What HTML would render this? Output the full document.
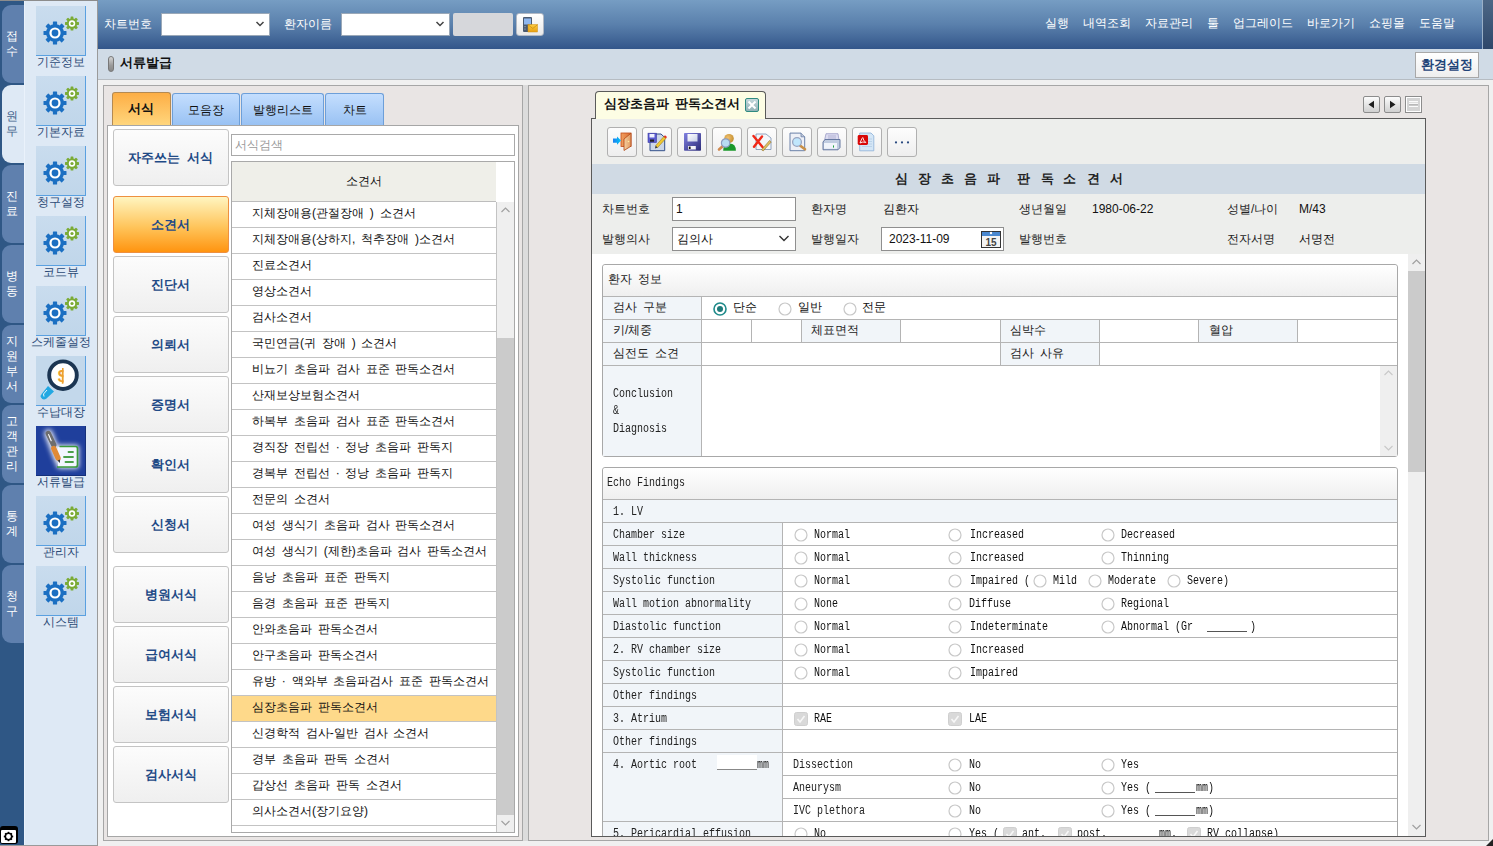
<!DOCTYPE html><html><head><meta charset="utf-8"><style>
html,body{margin:0;padding:0;}
body{width:1493px;height:846px;overflow:hidden;position:relative;background:#f0f0f0;font-family:"Liberation Sans", sans-serif;font-size:12px;color:#111;word-spacing:2.5px;}
div{box-sizing:border-box;}
.mono{font-family:"Liberation Mono", monospace;word-spacing:0;}

</style></head><body>
<div style="position:absolute;left:0px;top:0px;width:24px;height:845px;background:#2f5785;"></div>
<div style="position:absolute;left:2px;top:5px;width:22px;height:78px;background:#5f80ae;border-radius:9px 0 0 9px;"></div>
<div style="position:absolute;left:-188.5px;top:29.0px;width:400px;height:15px;line-height:15px;text-align:center;white-space:nowrap;color:#ffffff;font-size:12px;">접</div>
<div style="position:absolute;left:-188.5px;top:44.0px;width:400px;height:15px;line-height:15px;text-align:center;white-space:nowrap;color:#ffffff;font-size:12px;">수</div>
<div style="position:absolute;left:2px;top:85px;width:24px;height:78px;background:#dee9f5;border-radius:9px 0 0 9px;"></div>
<div style="position:absolute;left:-188.5px;top:109.0px;width:400px;height:15px;line-height:15px;text-align:center;white-space:nowrap;color:#3f5f8a;font-size:12px;">원</div>
<div style="position:absolute;left:-188.5px;top:124.0px;width:400px;height:15px;line-height:15px;text-align:center;white-space:nowrap;color:#3f5f8a;font-size:12px;">무</div>
<div style="position:absolute;left:2px;top:165px;width:22px;height:78px;background:#5f80ae;border-radius:9px 0 0 9px;"></div>
<div style="position:absolute;left:-188.5px;top:189.0px;width:400px;height:15px;line-height:15px;text-align:center;white-space:nowrap;color:#ffffff;font-size:12px;">진</div>
<div style="position:absolute;left:-188.5px;top:204.0px;width:400px;height:15px;line-height:15px;text-align:center;white-space:nowrap;color:#ffffff;font-size:12px;">료</div>
<div style="position:absolute;left:2px;top:245px;width:22px;height:78px;background:#5f80ae;border-radius:9px 0 0 9px;"></div>
<div style="position:absolute;left:-188.5px;top:269.0px;width:400px;height:15px;line-height:15px;text-align:center;white-space:nowrap;color:#ffffff;font-size:12px;">병</div>
<div style="position:absolute;left:-188.5px;top:284.0px;width:400px;height:15px;line-height:15px;text-align:center;white-space:nowrap;color:#ffffff;font-size:12px;">동</div>
<div style="position:absolute;left:2px;top:325px;width:22px;height:78px;background:#5f80ae;border-radius:9px 0 0 9px;"></div>
<div style="position:absolute;left:-188.5px;top:334.0px;width:400px;height:15px;line-height:15px;text-align:center;white-space:nowrap;color:#ffffff;font-size:12px;">지</div>
<div style="position:absolute;left:-188.5px;top:349.0px;width:400px;height:15px;line-height:15px;text-align:center;white-space:nowrap;color:#ffffff;font-size:12px;">원</div>
<div style="position:absolute;left:-188.5px;top:364.0px;width:400px;height:15px;line-height:15px;text-align:center;white-space:nowrap;color:#ffffff;font-size:12px;">부</div>
<div style="position:absolute;left:-188.5px;top:379.0px;width:400px;height:15px;line-height:15px;text-align:center;white-space:nowrap;color:#ffffff;font-size:12px;">서</div>
<div style="position:absolute;left:2px;top:405px;width:22px;height:78px;background:#5f80ae;border-radius:9px 0 0 9px;"></div>
<div style="position:absolute;left:-188.5px;top:414.0px;width:400px;height:15px;line-height:15px;text-align:center;white-space:nowrap;color:#ffffff;font-size:12px;">고</div>
<div style="position:absolute;left:-188.5px;top:429.0px;width:400px;height:15px;line-height:15px;text-align:center;white-space:nowrap;color:#ffffff;font-size:12px;">객</div>
<div style="position:absolute;left:-188.5px;top:444.0px;width:400px;height:15px;line-height:15px;text-align:center;white-space:nowrap;color:#ffffff;font-size:12px;">관</div>
<div style="position:absolute;left:-188.5px;top:459.0px;width:400px;height:15px;line-height:15px;text-align:center;white-space:nowrap;color:#ffffff;font-size:12px;">리</div>
<div style="position:absolute;left:2px;top:485px;width:22px;height:78px;background:#5f80ae;border-radius:9px 0 0 9px;"></div>
<div style="position:absolute;left:-188.5px;top:509.0px;width:400px;height:15px;line-height:15px;text-align:center;white-space:nowrap;color:#ffffff;font-size:12px;">통</div>
<div style="position:absolute;left:-188.5px;top:524.0px;width:400px;height:15px;line-height:15px;text-align:center;white-space:nowrap;color:#ffffff;font-size:12px;">계</div>
<div style="position:absolute;left:2px;top:565px;width:22px;height:78px;background:#5f80ae;border-radius:9px 0 0 9px;"></div>
<div style="position:absolute;left:-188.5px;top:589.0px;width:400px;height:15px;line-height:15px;text-align:center;white-space:nowrap;color:#ffffff;font-size:12px;">청</div>
<div style="position:absolute;left:-188.5px;top:604.0px;width:400px;height:15px;line-height:15px;text-align:center;white-space:nowrap;color:#ffffff;font-size:12px;">구</div>
<div style="position:absolute;left:0px;top:826px;width:18px;height:18px;background:#000;border-radius:3px;"></div>
<div style="position:absolute;left:1px;top:830px;width:15px;height:13px;background:#fff;border-radius:1px;"></div>
<svg style="position:absolute;left:3px;top:831px" width="11" height="11" viewBox="0 0 11 11"><circle cx="5.5" cy="5.5" r="3.2" fill="none" stroke="#000" stroke-width="1.6"/><g stroke="#000" stroke-width="1.6"><line x1="5.5" y1="0.8" x2="5.5" y2="2.4"/><line x1="5.5" y1="8.6" x2="5.5" y2="10.2"/><line x1="0.8" y1="5.5" x2="2.4" y2="5.5"/><line x1="8.6" y1="5.5" x2="10.2" y2="5.5"/><line x1="2.2" y1="2.2" x2="3.2" y2="3.2"/><line x1="7.8" y1="7.8" x2="8.8" y2="8.8"/><line x1="2.2" y1="8.8" x2="3.2" y2="7.8"/><line x1="7.8" y1="3.2" x2="8.8" y2="2.2"/></g></svg>
<div style="position:absolute;left:24px;top:0px;width:74px;height:845px;background:#dee9f5;border-right:1px solid #9a9a9a;"></div>
<div style="position:absolute;left:36px;top:6px;width:50px;height:50px;background:linear-gradient(#c9dcee,#c0d6ea);border-right:1px solid #5aa0e0;border-bottom:1px solid #5aa0e0;"></div>
<svg style="position:absolute;left:36px;top:6px" width="50" height="49" viewBox="0 0 50 49"><circle cx="19" cy="27" r="9" fill="#1b6fc2"/><rect x="16.9" y="15.5" width="4.2" height="3.5" fill="#1b6fc2" transform="rotate(0.0 19 27)" rx="0.6"/><rect x="16.9" y="15.5" width="4.2" height="3.5" fill="#1b6fc2" transform="rotate(45.0 19 27)" rx="0.6"/><rect x="16.9" y="15.5" width="4.2" height="3.5" fill="#1b6fc2" transform="rotate(90.0 19 27)" rx="0.6"/><rect x="16.9" y="15.5" width="4.2" height="3.5" fill="#1b6fc2" transform="rotate(135.0 19 27)" rx="0.6"/><rect x="16.9" y="15.5" width="4.2" height="3.5" fill="#1b6fc2" transform="rotate(180.0 19 27)" rx="0.6"/><rect x="16.9" y="15.5" width="4.2" height="3.5" fill="#1b6fc2" transform="rotate(225.0 19 27)" rx="0.6"/><rect x="16.9" y="15.5" width="4.2" height="3.5" fill="#1b6fc2" transform="rotate(270.0 19 27)" rx="0.6"/><rect x="16.9" y="15.5" width="4.2" height="3.5" fill="#1b6fc2" transform="rotate(315.0 19 27)" rx="0.6"/><circle cx="19" cy="27" r="5.6" fill="#fff"/><circle cx="19" cy="27" r="3.4" fill="#1b6fc2"/><circle cx="36" cy="17.5" r="5.2" fill="#7bab35"/><rect x="34.6" y="10.5" width="2.8" height="2.8" fill="#7bab35" transform="rotate(0.0 36 17.5)" rx="0.6"/><rect x="34.6" y="10.5" width="2.8" height="2.8" fill="#7bab35" transform="rotate(45.0 36 17.5)" rx="0.6"/><rect x="34.6" y="10.5" width="2.8" height="2.8" fill="#7bab35" transform="rotate(90.0 36 17.5)" rx="0.6"/><rect x="34.6" y="10.5" width="2.8" height="2.8" fill="#7bab35" transform="rotate(135.0 36 17.5)" rx="0.6"/><rect x="34.6" y="10.5" width="2.8" height="2.8" fill="#7bab35" transform="rotate(180.0 36 17.5)" rx="0.6"/><rect x="34.6" y="10.5" width="2.8" height="2.8" fill="#7bab35" transform="rotate(225.0 36 17.5)" rx="0.6"/><rect x="34.6" y="10.5" width="2.8" height="2.8" fill="#7bab35" transform="rotate(270.0 36 17.5)" rx="0.6"/><rect x="34.6" y="10.5" width="2.8" height="2.8" fill="#7bab35" transform="rotate(315.0 36 17.5)" rx="0.6"/><circle cx="36" cy="17.5" r="3.2" fill="#fff"/><circle cx="36" cy="17.5" r="1.6" fill="#7bab35"/></svg>
<div style="position:absolute;left:-139px;top:54.5px;width:400px;height:15px;line-height:15px;text-align:center;white-space:nowrap;color:#2b4a76;font-size:12px;">기준정보</div>
<div style="position:absolute;left:36px;top:76px;width:50px;height:50px;background:linear-gradient(#c9dcee,#c0d6ea);border-right:1px solid #5aa0e0;border-bottom:1px solid #5aa0e0;"></div>
<svg style="position:absolute;left:36px;top:76px" width="50" height="49" viewBox="0 0 50 49"><circle cx="19" cy="27" r="9" fill="#1b6fc2"/><rect x="16.9" y="15.5" width="4.2" height="3.5" fill="#1b6fc2" transform="rotate(0.0 19 27)" rx="0.6"/><rect x="16.9" y="15.5" width="4.2" height="3.5" fill="#1b6fc2" transform="rotate(45.0 19 27)" rx="0.6"/><rect x="16.9" y="15.5" width="4.2" height="3.5" fill="#1b6fc2" transform="rotate(90.0 19 27)" rx="0.6"/><rect x="16.9" y="15.5" width="4.2" height="3.5" fill="#1b6fc2" transform="rotate(135.0 19 27)" rx="0.6"/><rect x="16.9" y="15.5" width="4.2" height="3.5" fill="#1b6fc2" transform="rotate(180.0 19 27)" rx="0.6"/><rect x="16.9" y="15.5" width="4.2" height="3.5" fill="#1b6fc2" transform="rotate(225.0 19 27)" rx="0.6"/><rect x="16.9" y="15.5" width="4.2" height="3.5" fill="#1b6fc2" transform="rotate(270.0 19 27)" rx="0.6"/><rect x="16.9" y="15.5" width="4.2" height="3.5" fill="#1b6fc2" transform="rotate(315.0 19 27)" rx="0.6"/><circle cx="19" cy="27" r="5.6" fill="#fff"/><circle cx="19" cy="27" r="3.4" fill="#1b6fc2"/><circle cx="36" cy="17.5" r="5.2" fill="#7bab35"/><rect x="34.6" y="10.5" width="2.8" height="2.8" fill="#7bab35" transform="rotate(0.0 36 17.5)" rx="0.6"/><rect x="34.6" y="10.5" width="2.8" height="2.8" fill="#7bab35" transform="rotate(45.0 36 17.5)" rx="0.6"/><rect x="34.6" y="10.5" width="2.8" height="2.8" fill="#7bab35" transform="rotate(90.0 36 17.5)" rx="0.6"/><rect x="34.6" y="10.5" width="2.8" height="2.8" fill="#7bab35" transform="rotate(135.0 36 17.5)" rx="0.6"/><rect x="34.6" y="10.5" width="2.8" height="2.8" fill="#7bab35" transform="rotate(180.0 36 17.5)" rx="0.6"/><rect x="34.6" y="10.5" width="2.8" height="2.8" fill="#7bab35" transform="rotate(225.0 36 17.5)" rx="0.6"/><rect x="34.6" y="10.5" width="2.8" height="2.8" fill="#7bab35" transform="rotate(270.0 36 17.5)" rx="0.6"/><rect x="34.6" y="10.5" width="2.8" height="2.8" fill="#7bab35" transform="rotate(315.0 36 17.5)" rx="0.6"/><circle cx="36" cy="17.5" r="3.2" fill="#fff"/><circle cx="36" cy="17.5" r="1.6" fill="#7bab35"/></svg>
<div style="position:absolute;left:-139px;top:124.5px;width:400px;height:15px;line-height:15px;text-align:center;white-space:nowrap;color:#2b4a76;font-size:12px;">기본자료</div>
<div style="position:absolute;left:36px;top:146px;width:50px;height:50px;background:linear-gradient(#c9dcee,#c0d6ea);border-right:1px solid #5aa0e0;border-bottom:1px solid #5aa0e0;"></div>
<svg style="position:absolute;left:36px;top:146px" width="50" height="49" viewBox="0 0 50 49"><circle cx="19" cy="27" r="9" fill="#1b6fc2"/><rect x="16.9" y="15.5" width="4.2" height="3.5" fill="#1b6fc2" transform="rotate(0.0 19 27)" rx="0.6"/><rect x="16.9" y="15.5" width="4.2" height="3.5" fill="#1b6fc2" transform="rotate(45.0 19 27)" rx="0.6"/><rect x="16.9" y="15.5" width="4.2" height="3.5" fill="#1b6fc2" transform="rotate(90.0 19 27)" rx="0.6"/><rect x="16.9" y="15.5" width="4.2" height="3.5" fill="#1b6fc2" transform="rotate(135.0 19 27)" rx="0.6"/><rect x="16.9" y="15.5" width="4.2" height="3.5" fill="#1b6fc2" transform="rotate(180.0 19 27)" rx="0.6"/><rect x="16.9" y="15.5" width="4.2" height="3.5" fill="#1b6fc2" transform="rotate(225.0 19 27)" rx="0.6"/><rect x="16.9" y="15.5" width="4.2" height="3.5" fill="#1b6fc2" transform="rotate(270.0 19 27)" rx="0.6"/><rect x="16.9" y="15.5" width="4.2" height="3.5" fill="#1b6fc2" transform="rotate(315.0 19 27)" rx="0.6"/><circle cx="19" cy="27" r="5.6" fill="#fff"/><circle cx="19" cy="27" r="3.4" fill="#1b6fc2"/><circle cx="36" cy="17.5" r="5.2" fill="#7bab35"/><rect x="34.6" y="10.5" width="2.8" height="2.8" fill="#7bab35" transform="rotate(0.0 36 17.5)" rx="0.6"/><rect x="34.6" y="10.5" width="2.8" height="2.8" fill="#7bab35" transform="rotate(45.0 36 17.5)" rx="0.6"/><rect x="34.6" y="10.5" width="2.8" height="2.8" fill="#7bab35" transform="rotate(90.0 36 17.5)" rx="0.6"/><rect x="34.6" y="10.5" width="2.8" height="2.8" fill="#7bab35" transform="rotate(135.0 36 17.5)" rx="0.6"/><rect x="34.6" y="10.5" width="2.8" height="2.8" fill="#7bab35" transform="rotate(180.0 36 17.5)" rx="0.6"/><rect x="34.6" y="10.5" width="2.8" height="2.8" fill="#7bab35" transform="rotate(225.0 36 17.5)" rx="0.6"/><rect x="34.6" y="10.5" width="2.8" height="2.8" fill="#7bab35" transform="rotate(270.0 36 17.5)" rx="0.6"/><rect x="34.6" y="10.5" width="2.8" height="2.8" fill="#7bab35" transform="rotate(315.0 36 17.5)" rx="0.6"/><circle cx="36" cy="17.5" r="3.2" fill="#fff"/><circle cx="36" cy="17.5" r="1.6" fill="#7bab35"/></svg>
<div style="position:absolute;left:-139px;top:194.5px;width:400px;height:15px;line-height:15px;text-align:center;white-space:nowrap;color:#2b4a76;font-size:12px;">청구설정</div>
<div style="position:absolute;left:36px;top:216px;width:50px;height:50px;background:linear-gradient(#c9dcee,#c0d6ea);border-right:1px solid #5aa0e0;border-bottom:1px solid #5aa0e0;"></div>
<svg style="position:absolute;left:36px;top:216px" width="50" height="49" viewBox="0 0 50 49"><circle cx="19" cy="27" r="9" fill="#1b6fc2"/><rect x="16.9" y="15.5" width="4.2" height="3.5" fill="#1b6fc2" transform="rotate(0.0 19 27)" rx="0.6"/><rect x="16.9" y="15.5" width="4.2" height="3.5" fill="#1b6fc2" transform="rotate(45.0 19 27)" rx="0.6"/><rect x="16.9" y="15.5" width="4.2" height="3.5" fill="#1b6fc2" transform="rotate(90.0 19 27)" rx="0.6"/><rect x="16.9" y="15.5" width="4.2" height="3.5" fill="#1b6fc2" transform="rotate(135.0 19 27)" rx="0.6"/><rect x="16.9" y="15.5" width="4.2" height="3.5" fill="#1b6fc2" transform="rotate(180.0 19 27)" rx="0.6"/><rect x="16.9" y="15.5" width="4.2" height="3.5" fill="#1b6fc2" transform="rotate(225.0 19 27)" rx="0.6"/><rect x="16.9" y="15.5" width="4.2" height="3.5" fill="#1b6fc2" transform="rotate(270.0 19 27)" rx="0.6"/><rect x="16.9" y="15.5" width="4.2" height="3.5" fill="#1b6fc2" transform="rotate(315.0 19 27)" rx="0.6"/><circle cx="19" cy="27" r="5.6" fill="#fff"/><circle cx="19" cy="27" r="3.4" fill="#1b6fc2"/><circle cx="36" cy="17.5" r="5.2" fill="#7bab35"/><rect x="34.6" y="10.5" width="2.8" height="2.8" fill="#7bab35" transform="rotate(0.0 36 17.5)" rx="0.6"/><rect x="34.6" y="10.5" width="2.8" height="2.8" fill="#7bab35" transform="rotate(45.0 36 17.5)" rx="0.6"/><rect x="34.6" y="10.5" width="2.8" height="2.8" fill="#7bab35" transform="rotate(90.0 36 17.5)" rx="0.6"/><rect x="34.6" y="10.5" width="2.8" height="2.8" fill="#7bab35" transform="rotate(135.0 36 17.5)" rx="0.6"/><rect x="34.6" y="10.5" width="2.8" height="2.8" fill="#7bab35" transform="rotate(180.0 36 17.5)" rx="0.6"/><rect x="34.6" y="10.5" width="2.8" height="2.8" fill="#7bab35" transform="rotate(225.0 36 17.5)" rx="0.6"/><rect x="34.6" y="10.5" width="2.8" height="2.8" fill="#7bab35" transform="rotate(270.0 36 17.5)" rx="0.6"/><rect x="34.6" y="10.5" width="2.8" height="2.8" fill="#7bab35" transform="rotate(315.0 36 17.5)" rx="0.6"/><circle cx="36" cy="17.5" r="3.2" fill="#fff"/><circle cx="36" cy="17.5" r="1.6" fill="#7bab35"/></svg>
<div style="position:absolute;left:-139px;top:264.5px;width:400px;height:15px;line-height:15px;text-align:center;white-space:nowrap;color:#2b4a76;font-size:12px;">코드뷰</div>
<div style="position:absolute;left:36px;top:286px;width:50px;height:50px;background:linear-gradient(#c9dcee,#c0d6ea);border-right:1px solid #5aa0e0;border-bottom:1px solid #5aa0e0;"></div>
<svg style="position:absolute;left:36px;top:286px" width="50" height="49" viewBox="0 0 50 49"><circle cx="19" cy="27" r="9" fill="#1b6fc2"/><rect x="16.9" y="15.5" width="4.2" height="3.5" fill="#1b6fc2" transform="rotate(0.0 19 27)" rx="0.6"/><rect x="16.9" y="15.5" width="4.2" height="3.5" fill="#1b6fc2" transform="rotate(45.0 19 27)" rx="0.6"/><rect x="16.9" y="15.5" width="4.2" height="3.5" fill="#1b6fc2" transform="rotate(90.0 19 27)" rx="0.6"/><rect x="16.9" y="15.5" width="4.2" height="3.5" fill="#1b6fc2" transform="rotate(135.0 19 27)" rx="0.6"/><rect x="16.9" y="15.5" width="4.2" height="3.5" fill="#1b6fc2" transform="rotate(180.0 19 27)" rx="0.6"/><rect x="16.9" y="15.5" width="4.2" height="3.5" fill="#1b6fc2" transform="rotate(225.0 19 27)" rx="0.6"/><rect x="16.9" y="15.5" width="4.2" height="3.5" fill="#1b6fc2" transform="rotate(270.0 19 27)" rx="0.6"/><rect x="16.9" y="15.5" width="4.2" height="3.5" fill="#1b6fc2" transform="rotate(315.0 19 27)" rx="0.6"/><circle cx="19" cy="27" r="5.6" fill="#fff"/><circle cx="19" cy="27" r="3.4" fill="#1b6fc2"/><circle cx="36" cy="17.5" r="5.2" fill="#7bab35"/><rect x="34.6" y="10.5" width="2.8" height="2.8" fill="#7bab35" transform="rotate(0.0 36 17.5)" rx="0.6"/><rect x="34.6" y="10.5" width="2.8" height="2.8" fill="#7bab35" transform="rotate(45.0 36 17.5)" rx="0.6"/><rect x="34.6" y="10.5" width="2.8" height="2.8" fill="#7bab35" transform="rotate(90.0 36 17.5)" rx="0.6"/><rect x="34.6" y="10.5" width="2.8" height="2.8" fill="#7bab35" transform="rotate(135.0 36 17.5)" rx="0.6"/><rect x="34.6" y="10.5" width="2.8" height="2.8" fill="#7bab35" transform="rotate(180.0 36 17.5)" rx="0.6"/><rect x="34.6" y="10.5" width="2.8" height="2.8" fill="#7bab35" transform="rotate(225.0 36 17.5)" rx="0.6"/><rect x="34.6" y="10.5" width="2.8" height="2.8" fill="#7bab35" transform="rotate(270.0 36 17.5)" rx="0.6"/><rect x="34.6" y="10.5" width="2.8" height="2.8" fill="#7bab35" transform="rotate(315.0 36 17.5)" rx="0.6"/><circle cx="36" cy="17.5" r="3.2" fill="#fff"/><circle cx="36" cy="17.5" r="1.6" fill="#7bab35"/></svg>
<div style="position:absolute;left:-139px;top:334.5px;width:400px;height:15px;line-height:15px;text-align:center;white-space:nowrap;color:#2b4a76;font-size:12px;">스케줄설정</div>
<div style="position:absolute;left:36px;top:356px;width:50px;height:50px;background:#c3d8eb;border-right:1px solid #5aa0e0;border-bottom:1px solid #5aa0e0;"></div>
<svg style="position:absolute;left:36px;top:356px" width="50" height="50" viewBox="0 0 50 50"><path d="M12 30 L18 35.5 L10.5 42.5 Q7 45 5 41.5 Q4 39.5 6 37.5 Z" fill="#22a8e2"/><path d="M11 34 L7.5 38 L8 40.5" fill="none" stroke="#fff" stroke-width="0.9"/><circle cx="27" cy="19.2" r="13.8" fill="#fff" stroke="#1b3552" stroke-width="3.9"/><clipPath id="hc"><rect x="0" y="0" width="27.5" height="50"/></clipPath><text x="26.5" y="26" font-size="17" font-weight="bold" fill="#eda030" text-anchor="middle" font-family="Liberation Sans" clip-path="url(#hc)">$</text><rect x="26" y="12" width="1.6" height="15.5" fill="#eda030"/></svg>
<div style="position:absolute;left:-139px;top:404.5px;width:400px;height:15px;line-height:15px;text-align:center;white-space:nowrap;color:#2b4a76;font-size:12px;">수납대장</div>
<div style="position:absolute;left:36px;top:426px;width:50px;height:50px;background:#1f3f9c;border-right:1px solid #15307a;border-bottom:1px solid #15307a;"></div>
<svg style="position:absolute;left:36px;top:426px" width="50" height="50" viewBox="0 0 50 50"><defs><filter id="glw" x="-50%" y="-50%" width="200%" height="200%"><feGaussianBlur stdDeviation="2.6"/></filter></defs><g filter="url(#glw)" opacity="0.95"><g stroke="#fff" fill="#fff" stroke-linecap="round"><line x1="12.5" y1="7.5" x2="22" y2="33" stroke-width="8"/><rect x="21" y="19.5" width="21.5" height="22.5" rx="2"/></g></g><rect x="22" y="21" width="19.5" height="20" fill="#f2f6ff"/><path d="M23.5 20.5 L39.5 20.5 Q41.5 20.5 41.5 22.5 L41.5 39 Q41.5 41 39.5 41 L21 41" fill="none" stroke="#3a9a3a" stroke-width="1.7"/><g stroke="#4aa04a" stroke-width="1.8" stroke-linecap="round"><line x1="32.5" y1="26" x2="37" y2="26"/><line x1="28" y1="31" x2="37" y2="31"/><line x1="29.5" y1="36" x2="37" y2="36"/></g><line x1="12.3" y1="7.5" x2="17.8" y2="19" stroke="#6e6e6e" stroke-width="5.4" stroke-linecap="round"/><line x1="12.6" y1="8.6" x2="15.2" y2="14.8" stroke="#fff" stroke-width="1.1" stroke-linecap="round"/><line x1="17.8" y1="22.5" x2="22" y2="32" stroke="#e08a36" stroke-width="5.4" stroke-linecap="round"/><path d="M21.5 34.5 L24.2 33.5 L23.8 37 Z" fill="#333"/></svg>
<div style="position:absolute;left:-139px;top:474.5px;width:400px;height:15px;line-height:15px;text-align:center;white-space:nowrap;color:#2b4a76;font-size:12px;">서류발급</div>
<div style="position:absolute;left:36px;top:496px;width:50px;height:50px;background:linear-gradient(#c9dcee,#c0d6ea);border-right:1px solid #5aa0e0;border-bottom:1px solid #5aa0e0;"></div>
<svg style="position:absolute;left:36px;top:496px" width="50" height="49" viewBox="0 0 50 49"><circle cx="19" cy="27" r="9" fill="#1b6fc2"/><rect x="16.9" y="15.5" width="4.2" height="3.5" fill="#1b6fc2" transform="rotate(0.0 19 27)" rx="0.6"/><rect x="16.9" y="15.5" width="4.2" height="3.5" fill="#1b6fc2" transform="rotate(45.0 19 27)" rx="0.6"/><rect x="16.9" y="15.5" width="4.2" height="3.5" fill="#1b6fc2" transform="rotate(90.0 19 27)" rx="0.6"/><rect x="16.9" y="15.5" width="4.2" height="3.5" fill="#1b6fc2" transform="rotate(135.0 19 27)" rx="0.6"/><rect x="16.9" y="15.5" width="4.2" height="3.5" fill="#1b6fc2" transform="rotate(180.0 19 27)" rx="0.6"/><rect x="16.9" y="15.5" width="4.2" height="3.5" fill="#1b6fc2" transform="rotate(225.0 19 27)" rx="0.6"/><rect x="16.9" y="15.5" width="4.2" height="3.5" fill="#1b6fc2" transform="rotate(270.0 19 27)" rx="0.6"/><rect x="16.9" y="15.5" width="4.2" height="3.5" fill="#1b6fc2" transform="rotate(315.0 19 27)" rx="0.6"/><circle cx="19" cy="27" r="5.6" fill="#fff"/><circle cx="19" cy="27" r="3.4" fill="#1b6fc2"/><circle cx="36" cy="17.5" r="5.2" fill="#7bab35"/><rect x="34.6" y="10.5" width="2.8" height="2.8" fill="#7bab35" transform="rotate(0.0 36 17.5)" rx="0.6"/><rect x="34.6" y="10.5" width="2.8" height="2.8" fill="#7bab35" transform="rotate(45.0 36 17.5)" rx="0.6"/><rect x="34.6" y="10.5" width="2.8" height="2.8" fill="#7bab35" transform="rotate(90.0 36 17.5)" rx="0.6"/><rect x="34.6" y="10.5" width="2.8" height="2.8" fill="#7bab35" transform="rotate(135.0 36 17.5)" rx="0.6"/><rect x="34.6" y="10.5" width="2.8" height="2.8" fill="#7bab35" transform="rotate(180.0 36 17.5)" rx="0.6"/><rect x="34.6" y="10.5" width="2.8" height="2.8" fill="#7bab35" transform="rotate(225.0 36 17.5)" rx="0.6"/><rect x="34.6" y="10.5" width="2.8" height="2.8" fill="#7bab35" transform="rotate(270.0 36 17.5)" rx="0.6"/><rect x="34.6" y="10.5" width="2.8" height="2.8" fill="#7bab35" transform="rotate(315.0 36 17.5)" rx="0.6"/><circle cx="36" cy="17.5" r="3.2" fill="#fff"/><circle cx="36" cy="17.5" r="1.6" fill="#7bab35"/></svg>
<div style="position:absolute;left:-139px;top:544.5px;width:400px;height:15px;line-height:15px;text-align:center;white-space:nowrap;color:#2b4a76;font-size:12px;">관리자</div>
<div style="position:absolute;left:36px;top:566px;width:50px;height:50px;background:linear-gradient(#c9dcee,#c0d6ea);border-right:1px solid #5aa0e0;border-bottom:1px solid #5aa0e0;"></div>
<svg style="position:absolute;left:36px;top:566px" width="50" height="49" viewBox="0 0 50 49"><circle cx="19" cy="27" r="9" fill="#1b6fc2"/><rect x="16.9" y="15.5" width="4.2" height="3.5" fill="#1b6fc2" transform="rotate(0.0 19 27)" rx="0.6"/><rect x="16.9" y="15.5" width="4.2" height="3.5" fill="#1b6fc2" transform="rotate(45.0 19 27)" rx="0.6"/><rect x="16.9" y="15.5" width="4.2" height="3.5" fill="#1b6fc2" transform="rotate(90.0 19 27)" rx="0.6"/><rect x="16.9" y="15.5" width="4.2" height="3.5" fill="#1b6fc2" transform="rotate(135.0 19 27)" rx="0.6"/><rect x="16.9" y="15.5" width="4.2" height="3.5" fill="#1b6fc2" transform="rotate(180.0 19 27)" rx="0.6"/><rect x="16.9" y="15.5" width="4.2" height="3.5" fill="#1b6fc2" transform="rotate(225.0 19 27)" rx="0.6"/><rect x="16.9" y="15.5" width="4.2" height="3.5" fill="#1b6fc2" transform="rotate(270.0 19 27)" rx="0.6"/><rect x="16.9" y="15.5" width="4.2" height="3.5" fill="#1b6fc2" transform="rotate(315.0 19 27)" rx="0.6"/><circle cx="19" cy="27" r="5.6" fill="#fff"/><circle cx="19" cy="27" r="3.4" fill="#1b6fc2"/><circle cx="36" cy="17.5" r="5.2" fill="#7bab35"/><rect x="34.6" y="10.5" width="2.8" height="2.8" fill="#7bab35" transform="rotate(0.0 36 17.5)" rx="0.6"/><rect x="34.6" y="10.5" width="2.8" height="2.8" fill="#7bab35" transform="rotate(45.0 36 17.5)" rx="0.6"/><rect x="34.6" y="10.5" width="2.8" height="2.8" fill="#7bab35" transform="rotate(90.0 36 17.5)" rx="0.6"/><rect x="34.6" y="10.5" width="2.8" height="2.8" fill="#7bab35" transform="rotate(135.0 36 17.5)" rx="0.6"/><rect x="34.6" y="10.5" width="2.8" height="2.8" fill="#7bab35" transform="rotate(180.0 36 17.5)" rx="0.6"/><rect x="34.6" y="10.5" width="2.8" height="2.8" fill="#7bab35" transform="rotate(225.0 36 17.5)" rx="0.6"/><rect x="34.6" y="10.5" width="2.8" height="2.8" fill="#7bab35" transform="rotate(270.0 36 17.5)" rx="0.6"/><rect x="34.6" y="10.5" width="2.8" height="2.8" fill="#7bab35" transform="rotate(315.0 36 17.5)" rx="0.6"/><circle cx="36" cy="17.5" r="3.2" fill="#fff"/><circle cx="36" cy="17.5" r="1.6" fill="#7bab35"/></svg>
<div style="position:absolute;left:-139px;top:614.5px;width:400px;height:15px;line-height:15px;text-align:center;white-space:nowrap;color:#2b4a76;font-size:12px;">시스템</div>
<div style="position:absolute;left:0px;top:0px;width:98px;height:1px;background:#8c8c8c;"></div>
<div style="position:absolute;left:24px;top:1px;width:1px;height:844px;background:#eaf2fb;"></div>
<div style="position:absolute;left:98px;top:0px;width:1385px;height:49px;background:linear-gradient(#769dc3,#5a80ac 50%,#33568a);"></div>
<div style="position:absolute;left:1482px;top:0px;width:1px;height:49px;background:#9ab0c8;"></div>
<div style="position:absolute;left:1483px;top:0px;width:10px;height:49px;background:linear-gradient(#4d6786,#2e476a);"></div>
<div style="position:absolute;left:104px;top:16.0px;height:16px;line-height:16px;white-space:nowrap;color:#fff;font-size:12px;">차트번호</div>
<div style="position:absolute;left:161px;top:13px;width:109px;height:23px;background:#fff;border:1px solid #9aa8b8;"></div>
<svg style="position:absolute;left:255px;top:20px" width="10" height="8"><path d="M1.5 2 L5 5.5 L8.5 2" fill="none" stroke="#444" stroke-width="1.5"/></svg>
<div style="position:absolute;left:284px;top:16.0px;height:16px;line-height:16px;white-space:nowrap;color:#fff;font-size:12px;">환자이름</div>
<div style="position:absolute;left:341px;top:13px;width:109px;height:23px;background:#fff;border:1px solid #9aa8b8;"></div>
<svg style="position:absolute;left:435px;top:20px" width="10" height="8"><path d="M1.5 2 L5 5.5 L8.5 2" fill="none" stroke="#444" stroke-width="1.5"/></svg>
<div style="position:absolute;left:453px;top:13px;width:60px;height:23px;background:#d6d7db;border-radius:2px;"></div>
<div style="position:absolute;left:516px;top:13px;width:28px;height:23px;background:linear-gradient(#fff,#e8e8e8);border:1px solid #b0b8c4;border-radius:3px;"></div>
<svg style="position:absolute;left:522px;top:16px" width="18" height="17" viewBox="0 0 18 17"><rect x="1" y="1" width="9" height="15" rx="1" fill="#4a5a70"/><rect x="2" y="2.5" width="7" height="6" fill="#90b8f0"/><g fill="#8a9ab0"><rect x="2.3" y="10" width="1.4" height="1.2"/><rect x="2.3" y="12.5" width="1.4" height="1.2"/></g><defs><linearGradient id="env" x1="0" y1="0" x2="0" y2="1"><stop offset="0" stop-color="#fccc40"/><stop offset="1" stop-color="#e8a010"/></linearGradient></defs><rect x="6" y="8.5" width="9.5" height="7.5" fill="url(#env)" stroke="#d09018" stroke-width="0.5"/><path d="M6 8.7 L10.75 12.5 L15.5 8.7" fill="none" stroke="#c88a10" stroke-width="0.7"/></svg>
<div style="position:absolute;left:1045px;top:15.0px;height:16px;line-height:16px;white-space:nowrap;color:#fff;font-size:12px;">실행</div>
<div style="position:absolute;left:1083px;top:15.0px;height:16px;line-height:16px;white-space:nowrap;color:#fff;font-size:12px;">내역조회</div>
<div style="position:absolute;left:1145px;top:15.0px;height:16px;line-height:16px;white-space:nowrap;color:#fff;font-size:12px;">자료관리</div>
<div style="position:absolute;left:1207px;top:15.0px;height:16px;line-height:16px;white-space:nowrap;color:#fff;font-size:12px;">툴</div>
<div style="position:absolute;left:1233px;top:15.0px;height:16px;line-height:16px;white-space:nowrap;color:#fff;font-size:12px;">업그레이드</div>
<div style="position:absolute;left:1307px;top:15.0px;height:16px;line-height:16px;white-space:nowrap;color:#fff;font-size:12px;">바로가기</div>
<div style="position:absolute;left:1369px;top:15.0px;height:16px;line-height:16px;white-space:nowrap;color:#fff;font-size:12px;">쇼핑몰</div>
<div style="position:absolute;left:1419px;top:15.0px;height:16px;line-height:16px;white-space:nowrap;color:#fff;font-size:12px;">도움말</div>
<div style="position:absolute;left:98px;top:49px;width:1395px;height:31px;background:#d0dbe6;border-bottom:1px solid #b6bcc2;"></div>
<div style="position:absolute;left:108px;top:56px;width:6px;height:16px;background:linear-gradient(#d4d4d4,#9a9a9a 60%,#888);border-radius:3px;border:1px solid #787878;"></div>
<div style="position:absolute;left:120px;top:55.0px;height:16px;line-height:16px;white-space:nowrap;color:#111;font-size:13px;font-weight:bold;">서류발급</div>
<div style="position:absolute;left:1415px;top:52px;width:64px;height:26px;background:linear-gradient(#ffffff,#eeeeee);border:1px solid #a8a8a8;"></div>
<div style="position:absolute;left:1247px;top:56.5px;width:400px;height:16px;line-height:16px;text-align:center;white-space:nowrap;color:#1f4478;font-size:13px;font-weight:bold;">환경설정</div>
<div style="position:absolute;left:103px;top:85px;width:420px;height:756px;background:#e9e5e4;border:1px solid #a6a6a6;"></div>
<div style="position:absolute;left:112px;top:92px;width:59px;height:34px;background:linear-gradient(#fdae45,#ffd77e);border:1px solid #b48a52;border-bottom:none;border-radius:3px 3px 0 0;"></div>
<div style="position:absolute;left:-59.5px;top:101.0px;width:400px;height:16px;line-height:16px;text-align:center;white-space:nowrap;color:#111;font-size:13px;font-weight:bold;">서식</div>
<div style="position:absolute;left:172px;top:93px;width:68px;height:33px;background:linear-gradient(#c4defe,#98c1f3);border:1px solid #6d9fd9;border-bottom:none;border-radius:3px 3px 0 0;"></div>
<div style="position:absolute;left:6.0px;top:102.0px;width:400px;height:16px;line-height:16px;text-align:center;white-space:nowrap;color:#111;font-size:12px;">모음장</div>
<div style="position:absolute;left:241px;top:93px;width:83px;height:33px;background:linear-gradient(#c4defe,#98c1f3);border:1px solid #6d9fd9;border-bottom:none;border-radius:3px 3px 0 0;"></div>
<div style="position:absolute;left:82.5px;top:102.0px;width:400px;height:16px;line-height:16px;text-align:center;white-space:nowrap;color:#111;font-size:12px;">발행리스트</div>
<div style="position:absolute;left:325px;top:93px;width:59px;height:33px;background:linear-gradient(#c4defe,#98c1f3);border:1px solid #6d9fd9;border-bottom:none;border-radius:3px 3px 0 0;"></div>
<div style="position:absolute;left:154.5px;top:102.0px;width:400px;height:16px;line-height:16px;text-align:center;white-space:nowrap;color:#111;font-size:12px;">차트</div>
<div style="position:absolute;left:107px;top:125px;width:412px;height:712px;background:#fff;border:1px solid #a6a6a6;"></div>
<div style="position:absolute;left:113px;top:129px;width:116px;height:57px;background:linear-gradient(#fcfcfc,#efefef);border:1px solid #c4c4c4;border-radius:3px;"></div>
<div style="position:absolute;left:-29.5px;top:149.5px;width:400px;height:16px;line-height:16px;text-align:center;white-space:nowrap;color:#1f4a86;font-size:13px;font-weight:bold;">자주쓰는 서식</div>
<div style="position:absolute;left:113px;top:196px;width:116px;height:57px;background:linear-gradient(#fff5c0,#ffc45a 55%,#ff9410);border:1px solid #ee9040;border-radius:3px;"></div>
<div style="position:absolute;left:-29.5px;top:216.5px;width:400px;height:16px;line-height:16px;text-align:center;white-space:nowrap;color:#1f4a86;font-size:13px;font-weight:bold;">소견서</div>
<div style="position:absolute;left:113px;top:256px;width:116px;height:57px;background:linear-gradient(#fcfcfc,#efefef);border:1px solid #c4c4c4;border-radius:3px;"></div>
<div style="position:absolute;left:-29.5px;top:276.5px;width:400px;height:16px;line-height:16px;text-align:center;white-space:nowrap;color:#1f4a86;font-size:13px;font-weight:bold;">진단서</div>
<div style="position:absolute;left:113px;top:316px;width:116px;height:57px;background:linear-gradient(#fcfcfc,#efefef);border:1px solid #c4c4c4;border-radius:3px;"></div>
<div style="position:absolute;left:-29.5px;top:336.5px;width:400px;height:16px;line-height:16px;text-align:center;white-space:nowrap;color:#1f4a86;font-size:13px;font-weight:bold;">의뢰서</div>
<div style="position:absolute;left:113px;top:376px;width:116px;height:57px;background:linear-gradient(#fcfcfc,#efefef);border:1px solid #c4c4c4;border-radius:3px;"></div>
<div style="position:absolute;left:-29.5px;top:396.5px;width:400px;height:16px;line-height:16px;text-align:center;white-space:nowrap;color:#1f4a86;font-size:13px;font-weight:bold;">증명서</div>
<div style="position:absolute;left:113px;top:436px;width:116px;height:57px;background:linear-gradient(#fcfcfc,#efefef);border:1px solid #c4c4c4;border-radius:3px;"></div>
<div style="position:absolute;left:-29.5px;top:456.5px;width:400px;height:16px;line-height:16px;text-align:center;white-space:nowrap;color:#1f4a86;font-size:13px;font-weight:bold;">확인서</div>
<div style="position:absolute;left:113px;top:496px;width:116px;height:57px;background:linear-gradient(#fcfcfc,#efefef);border:1px solid #c4c4c4;border-radius:3px;"></div>
<div style="position:absolute;left:-29.5px;top:516.5px;width:400px;height:16px;line-height:16px;text-align:center;white-space:nowrap;color:#1f4a86;font-size:13px;font-weight:bold;">신청서</div>
<div style="position:absolute;left:113px;top:566px;width:116px;height:57px;background:linear-gradient(#fcfcfc,#efefef);border:1px solid #c4c4c4;border-radius:3px;"></div>
<div style="position:absolute;left:-29.5px;top:586.5px;width:400px;height:16px;line-height:16px;text-align:center;white-space:nowrap;color:#1f4a86;font-size:13px;font-weight:bold;">병원서식</div>
<div style="position:absolute;left:113px;top:626px;width:116px;height:57px;background:linear-gradient(#fcfcfc,#efefef);border:1px solid #c4c4c4;border-radius:3px;"></div>
<div style="position:absolute;left:-29.5px;top:646.5px;width:400px;height:16px;line-height:16px;text-align:center;white-space:nowrap;color:#1f4a86;font-size:13px;font-weight:bold;">급여서식</div>
<div style="position:absolute;left:113px;top:686px;width:116px;height:57px;background:linear-gradient(#fcfcfc,#efefef);border:1px solid #c4c4c4;border-radius:3px;"></div>
<div style="position:absolute;left:-29.5px;top:706.5px;width:400px;height:16px;line-height:16px;text-align:center;white-space:nowrap;color:#1f4a86;font-size:13px;font-weight:bold;">보험서식</div>
<div style="position:absolute;left:113px;top:746px;width:116px;height:57px;background:linear-gradient(#fcfcfc,#efefef);border:1px solid #c4c4c4;border-radius:3px;"></div>
<div style="position:absolute;left:-29.5px;top:766.5px;width:400px;height:16px;line-height:16px;text-align:center;white-space:nowrap;color:#1f4a86;font-size:13px;font-weight:bold;">검사서식</div>
<div style="position:absolute;left:231px;top:134px;width:284px;height:22px;background:#fff;border:1px solid #a9a9a9;"></div>
<div style="position:absolute;left:235px;top:137.0px;height:16px;line-height:16px;white-space:nowrap;color:#9a9a9a;font-size:12px;">서식검색</div>
<div style="position:absolute;left:231px;top:161px;width:284px;height:672px;background:#fff;border:1px solid #a9a9a9;"></div>
<div style="position:absolute;left:232px;top:162px;width:264px;height:40px;background:#efefe9;border-bottom:1px solid #bdbdbd;"></div>
<div style="position:absolute;left:164px;top:173.0px;width:400px;height:16px;line-height:16px;text-align:center;white-space:nowrap;color:#111;font-size:12px;">소견서</div>
<div style="position:absolute;left:232px;top:202px;width:264px;height:26px;background:#fff;border-bottom:1px solid #c3c3c3;"></div>
<div style="position:absolute;left:252px;top:204.5px;height:16px;line-height:16px;white-space:nowrap;color:#111;font-size:12px;">지체장애용(관절장애 ) 소견서</div>
<div style="position:absolute;left:232px;top:228px;width:264px;height:26px;background:#fff;border-bottom:1px solid #c3c3c3;"></div>
<div style="position:absolute;left:252px;top:230.5px;height:16px;line-height:16px;white-space:nowrap;color:#111;font-size:12px;">지체장애용(상하지, 척추장애 )소견서</div>
<div style="position:absolute;left:232px;top:254px;width:264px;height:26px;background:#fff;border-bottom:1px solid #c3c3c3;"></div>
<div style="position:absolute;left:252px;top:256.5px;height:16px;line-height:16px;white-space:nowrap;color:#111;font-size:12px;">진료소견서</div>
<div style="position:absolute;left:232px;top:280px;width:264px;height:26px;background:#fff;border-bottom:1px solid #c3c3c3;"></div>
<div style="position:absolute;left:252px;top:282.5px;height:16px;line-height:16px;white-space:nowrap;color:#111;font-size:12px;">영상소견서</div>
<div style="position:absolute;left:232px;top:306px;width:264px;height:26px;background:#fff;border-bottom:1px solid #c3c3c3;"></div>
<div style="position:absolute;left:252px;top:308.5px;height:16px;line-height:16px;white-space:nowrap;color:#111;font-size:12px;">검사소견서</div>
<div style="position:absolute;left:232px;top:332px;width:264px;height:26px;background:#fff;border-bottom:1px solid #c3c3c3;"></div>
<div style="position:absolute;left:252px;top:334.5px;height:16px;line-height:16px;white-space:nowrap;color:#111;font-size:12px;">국민연금(귀 장애 ) 소견서</div>
<div style="position:absolute;left:232px;top:358px;width:264px;height:26px;background:#fff;border-bottom:1px solid #c3c3c3;"></div>
<div style="position:absolute;left:252px;top:360.5px;height:16px;line-height:16px;white-space:nowrap;color:#111;font-size:12px;">비뇨기 초음파 검사 표준 판독소견서</div>
<div style="position:absolute;left:232px;top:384px;width:264px;height:26px;background:#fff;border-bottom:1px solid #c3c3c3;"></div>
<div style="position:absolute;left:252px;top:386.5px;height:16px;line-height:16px;white-space:nowrap;color:#111;font-size:12px;">산재보상보험소견서</div>
<div style="position:absolute;left:232px;top:410px;width:264px;height:26px;background:#fff;border-bottom:1px solid #c3c3c3;"></div>
<div style="position:absolute;left:252px;top:412.5px;height:16px;line-height:16px;white-space:nowrap;color:#111;font-size:12px;">하복부 초음파 검사 표준 판독소견서</div>
<div style="position:absolute;left:232px;top:436px;width:264px;height:26px;background:#fff;border-bottom:1px solid #c3c3c3;"></div>
<div style="position:absolute;left:252px;top:438.5px;height:16px;line-height:16px;white-space:nowrap;color:#111;font-size:12px;">경직장 전립선 · 정낭 초음파 판독지</div>
<div style="position:absolute;left:232px;top:462px;width:264px;height:26px;background:#fff;border-bottom:1px solid #c3c3c3;"></div>
<div style="position:absolute;left:252px;top:464.5px;height:16px;line-height:16px;white-space:nowrap;color:#111;font-size:12px;">경복부 전립선 · 정낭 초음파 판독지</div>
<div style="position:absolute;left:232px;top:488px;width:264px;height:26px;background:#fff;border-bottom:1px solid #c3c3c3;"></div>
<div style="position:absolute;left:252px;top:490.5px;height:16px;line-height:16px;white-space:nowrap;color:#111;font-size:12px;">전문의 소견서</div>
<div style="position:absolute;left:232px;top:514px;width:264px;height:26px;background:#fff;border-bottom:1px solid #c3c3c3;"></div>
<div style="position:absolute;left:252px;top:516.5px;height:16px;line-height:16px;white-space:nowrap;color:#111;font-size:12px;">여성 생식기 초음파 검사 판독소견서</div>
<div style="position:absolute;left:232px;top:540px;width:264px;height:26px;background:#fff;border-bottom:1px solid #c3c3c3;"></div>
<div style="position:absolute;left:252px;top:542.5px;height:16px;line-height:16px;white-space:nowrap;color:#111;font-size:12px;">여성 생식기 (제한)초음파 검사 판독소견서</div>
<div style="position:absolute;left:232px;top:566px;width:264px;height:26px;background:#fff;border-bottom:1px solid #c3c3c3;"></div>
<div style="position:absolute;left:252px;top:568.5px;height:16px;line-height:16px;white-space:nowrap;color:#111;font-size:12px;">음낭 초음파 표준 판독지</div>
<div style="position:absolute;left:232px;top:592px;width:264px;height:26px;background:#fff;border-bottom:1px solid #c3c3c3;"></div>
<div style="position:absolute;left:252px;top:594.5px;height:16px;line-height:16px;white-space:nowrap;color:#111;font-size:12px;">음경 초음파 표준 판독지</div>
<div style="position:absolute;left:232px;top:618px;width:264px;height:26px;background:#fff;border-bottom:1px solid #c3c3c3;"></div>
<div style="position:absolute;left:252px;top:620.5px;height:16px;line-height:16px;white-space:nowrap;color:#111;font-size:12px;">안와초음파 판독소견서</div>
<div style="position:absolute;left:232px;top:644px;width:264px;height:26px;background:#fff;border-bottom:1px solid #c3c3c3;"></div>
<div style="position:absolute;left:252px;top:646.5px;height:16px;line-height:16px;white-space:nowrap;color:#111;font-size:12px;">안구초음파 판독소견서</div>
<div style="position:absolute;left:232px;top:670px;width:264px;height:26px;background:#fff;border-bottom:1px solid #c3c3c3;"></div>
<div style="position:absolute;left:252px;top:672.5px;height:16px;line-height:16px;white-space:nowrap;color:#111;font-size:12px;">유방 · 액와부 초음파검사 표준 판독소견서</div>
<div style="position:absolute;left:232px;top:696px;width:264px;height:26px;background:#fed98a;border-bottom:1px solid #c3c3c3;"></div>
<div style="position:absolute;left:252px;top:698.5px;height:16px;line-height:16px;white-space:nowrap;color:#111;font-size:12px;">심장초음파 판독소견서</div>
<div style="position:absolute;left:232px;top:722px;width:264px;height:26px;background:#fff;border-bottom:1px solid #c3c3c3;"></div>
<div style="position:absolute;left:252px;top:724.5px;height:16px;line-height:16px;white-space:nowrap;color:#111;font-size:12px;">신경학적 검사-일반 검사 소견서</div>
<div style="position:absolute;left:232px;top:748px;width:264px;height:26px;background:#fff;border-bottom:1px solid #c3c3c3;"></div>
<div style="position:absolute;left:252px;top:750.5px;height:16px;line-height:16px;white-space:nowrap;color:#111;font-size:12px;">경부 초음파 판독 소견서</div>
<div style="position:absolute;left:232px;top:774px;width:264px;height:26px;background:#fff;border-bottom:1px solid #c3c3c3;"></div>
<div style="position:absolute;left:252px;top:776.5px;height:16px;line-height:16px;white-space:nowrap;color:#111;font-size:12px;">갑상선 초음파 판독 소견서</div>
<div style="position:absolute;left:232px;top:800px;width:264px;height:26px;background:#fff;border-bottom:1px solid #c3c3c3;"></div>
<div style="position:absolute;left:252px;top:802.5px;height:16px;line-height:16px;white-space:nowrap;color:#111;font-size:12px;">의사소견서(장기요양)</div>
<div style="position:absolute;left:496px;top:202px;width:18px;height:630px;background:#efefef;border-left:1px solid #c3c3c3;"></div>
<div style="position:absolute;left:497px;top:338px;width:17px;height:477px;background:#cbcbcb;"></div>
<svg style="position:absolute;left:500px;top:206px" width="11" height="8"><path d="M1.5 6 L5.5 2 L9.5 6" fill="none" stroke="#a0a0a0" stroke-width="1.2"/></svg>
<svg style="position:absolute;left:500px;top:819px" width="11" height="8"><path d="M1.5 2 L5.5 6 L9.5 2" fill="none" stroke="#a0a0a0" stroke-width="1.2"/></svg>
<div style="position:absolute;left:523px;top:85px;width:5px;height:756px;background:#dcdcdc;"></div>
<div style="position:absolute;left:528px;top:85px;width:961px;height:756px;background:#e9e5e4;border:1px solid #a6a6a6;"></div>
<div style="position:absolute;left:595px;top:91px;width:171px;height:28px;background:#fdfde4;border:1px solid #5a5a5a;border-bottom:none;border-radius:4px 4px 0 0;"></div>
<div style="position:absolute;left:604px;top:96.0px;height:16px;line-height:16px;white-space:nowrap;color:#111;font-size:13px;font-weight:bold;">심장초음파 판독소견서</div>
<div style="position:absolute;left:745px;top:98px;width:14px;height:14px;background:linear-gradient(#c4d8dc,#92b2b6);border:1px solid #2e8a80;border-radius:2px;"></div>
<svg style="position:absolute;left:745px;top:98px" width="14" height="14"><path d="M3.5 3.5 L10.5 10.5 M10.5 3.5 L3.5 10.5" stroke="#fff" stroke-width="2"/></svg>
<div style="position:absolute;left:1363px;top:96px;width:17px;height:17px;background:linear-gradient(#fcfcfc,#d0d0d0);border:1px solid #8c8c8c;border-radius:2px;"></div>
<div style="position:absolute;left:1384px;top:96px;width:17px;height:17px;background:linear-gradient(#fcfcfc,#d0d0d0);border:1px solid #8c8c8c;border-radius:2px;"></div>
<div style="position:absolute;left:1405px;top:96px;width:17px;height:17px;background:#d4d4d4;border:1px solid #8c8c8c;box-shadow:inset 0 0 0 1px #fff;"></div>
<svg style="position:absolute;left:1363px;top:96px" width="17" height="17"><path d="M5.5 8.5 L11 4.8 L11 12.2 Z" fill="#1e1e1e"/></svg>
<svg style="position:absolute;left:1384px;top:96px" width="17" height="17"><path d="M11.5 8.5 L6 4.8 L6 12.2 Z" fill="#1e1e1e"/></svg>
<svg style="position:absolute;left:1405px;top:96px" width="17" height="17"><g stroke-width="1"><line x1="4" y1="5.6" x2="13" y2="5.6" stroke="#fff"/><line x1="4" y1="7.3" x2="13" y2="7.3" stroke="#fff"/><line x1="4" y1="8.9" x2="13" y2="8.9" stroke="#a8a8a8"/><line x1="4" y1="10.4" x2="13" y2="10.4" stroke="#fff"/></g></svg>
<div style="position:absolute;left:591px;top:118px;width:835px;height:719px;background:#edeeec;border:1px solid #5a5a5a;"></div>
<div style="position:absolute;left:596px;top:118px;width:169px;height:1px;background:#fdfde4;"></div>
<div style="position:absolute;left:607px;top:127px;width:30px;height:30px;background:linear-gradient(#fdfdfd,#eeeeee);border:1px solid #b0b0b0;border-radius:3px;"></div>
<svg style="position:absolute;left:607px;top:127px" width="30" height="30" viewBox="0 0 30 30"><defs><linearGradient id="ga" x1="0" x2="1"><stop offset="0" stop-color="#1e7ef0"/><stop offset="1" stop-color="#00c8f5"/></linearGradient><linearGradient id="gd" x1="0" x2="1"><stop offset="0" stop-color="#f2a060"/><stop offset="1" stop-color="#d86a30"/></linearGradient><linearGradient id="gp" x1="0" x2="1"><stop offset="0" stop-color="#f6d0a0"/><stop offset="1" stop-color="#e09860"/></linearGradient></defs><rect x="14" y="6" width="10" height="13.5" fill="url(#gd)" stroke="#c04a18" stroke-width="0.8"/><path d="M17 12 L24 6.2 L24 19.2 L17 23.5 Z" fill="url(#gp)" stroke="#b04818" stroke-width="0.8"/><circle cx="21.5" cy="14.5" r="0.8" fill="#fff0a0"/><path d="M6 11.5 L10 11.5 L10 9.4 L14 13.6 L10 17.8 L10 15.7 L6 15.7 Z" fill="url(#ga)"/></svg>
<div style="position:absolute;left:642px;top:127px;width:30px;height:30px;background:linear-gradient(#fdfdfd,#eeeeee);border:1px solid #b0b0b0;border-radius:3px;"></div>
<svg style="position:absolute;left:642px;top:127px" width="30" height="30" viewBox="0 0 30 30"><path d="M8 7 L19 7 L22.7 10.5 L22.7 23.7 L8 23.7 Z" fill="#ccd6e6" stroke="#34508a" stroke-width="1"/><rect x="6" y="6.2" width="8.5" height="9.3" fill="#5a5ad0" stroke="#3a3aa0" stroke-width="0.6"/><rect x="7.5" y="7" width="5" height="3.5" fill="#eef0ff"/><rect x="8" y="12.5" width="4" height="2.2" fill="#222"/><path d="M13.6 18.8 L21.8 9.6 L23.9 11.4 L15.6 20.6 Z" fill="#f0c830" stroke="#907010" stroke-width="0.5"/><path d="M21.8 9.6 L23 8.2 L25 10 L23.9 11.4 Z" fill="#e83020"/><path d="M13.6 18.8 L15.6 20.6 L13 21.4 Z" fill="#333"/></svg>
<div style="position:absolute;left:677px;top:127px;width:30px;height:30px;background:linear-gradient(#fdfdfd,#eeeeee);border:1px solid #b0b0b0;border-radius:3px;"></div>
<svg style="position:absolute;left:677px;top:127px" width="30" height="30" viewBox="0 0 30 30"><defs><linearGradient id="gf" x1="0" y1="0" x2="1" y2="1"><stop offset="0" stop-color="#8080e0"/><stop offset="1" stop-color="#2c2c78"/></linearGradient><linearGradient id="gl" x1="0" y1="0" x2="1" y2="1"><stop offset="0" stop-color="#ffffff"/><stop offset="1" stop-color="#c8d0e8"/></linearGradient></defs><rect x="7" y="6" width="17" height="17.7" rx="0.8" fill="url(#gf)"/><rect x="10.5" y="7" width="10" height="7.5" fill="url(#gl)"/><rect x="11" y="19" width="7.8" height="3.5" fill="#f4f4f8"/><rect x="11.8" y="19.6" width="1.8" height="2.4" fill="#111"/></svg>
<div style="position:absolute;left:712px;top:127px;width:30px;height:30px;background:linear-gradient(#fdfdfd,#eeeeee);border:1px solid #b0b0b0;border-radius:3px;"></div>
<svg style="position:absolute;left:712px;top:127px" width="30" height="30" viewBox="0 0 30 30"><defs><radialGradient id="gh" cx="0.4" cy="0.4" r="0.7"><stop offset="0" stop-color="#f0c070"/><stop offset="1" stop-color="#c08a28"/></radialGradient></defs><ellipse cx="17" cy="11.5" rx="4.8" ry="4.6" fill="url(#gh)"/><path d="M11.2 23.7 Q11.5 16.4 17.5 16.4 Q23.9 16.4 23.9 23.7 Z" fill="#1a982a"/><line x1="11" y1="19" x2="7" y2="22.5" stroke="#d08a50" stroke-width="2.6" stroke-linecap="round"/><circle cx="13.6" cy="16" r="4.2" fill="#b8dcf0" stroke="#8c9cc0" stroke-width="1.2"/></svg>
<div style="position:absolute;left:747px;top:127px;width:30px;height:30px;background:linear-gradient(#fdfdfd,#eeeeee);border:1px solid #b0b0b0;border-radius:3px;"></div>
<svg style="position:absolute;left:747px;top:127px" width="30" height="30" viewBox="0 0 30 30"><path d="M9 7 L19 7 L24 11 L24 22.5 L9 22.5 Z" fill="#f4f6fa" stroke="#7890b0" stroke-width="0.8"/><path d="M6.5 9 L15.5 20 M15 9.4 L7 19.7" stroke="#f02818" stroke-width="2.4" stroke-linecap="round"/><path d="M14.5 22.8 L22.5 13.5 L24.2 15 L16.2 24 Z" fill="#e0c060" stroke="#806020" stroke-width="0.5"/></svg>
<div style="position:absolute;left:782px;top:127px;width:30px;height:30px;background:linear-gradient(#fdfdfd,#eeeeee);border:1px solid #b0b0b0;border-radius:3px;"></div>
<svg style="position:absolute;left:782px;top:127px" width="30" height="30" viewBox="0 0 30 30"><path d="M8 6.1 L19 6.1 L22.7 9.8 L22.7 23.7 L8 23.7 Z" fill="#eef0f6" stroke="#6a80a8" stroke-width="1"/><path d="M19 6.1 L19 9.8 L22.7 9.8" fill="#c0c8d8" stroke="#6a80a8" stroke-width="0.8"/><line x1="18.3" y1="18.7" x2="23" y2="22.3" stroke="#c89048" stroke-width="2.6" stroke-linecap="round"/><circle cx="15" cy="15" r="4.4" fill="#c0e6fc" stroke="#98a4c0" stroke-width="1.3"/></svg>
<div style="position:absolute;left:817px;top:127px;width:30px;height:30px;background:linear-gradient(#fdfdfd,#eeeeee);border:1px solid #b0b0b0;border-radius:3px;"></div>
<svg style="position:absolute;left:817px;top:127px" width="30" height="30" viewBox="0 0 30 30"><path d="M9 6.7 L21 6.7 L22 13.4 L7.5 13.4 Z" fill="#dcdcf0" stroke="#9090c0" stroke-width="0.7"/><line x1="11" y1="9" x2="19" y2="9" stroke="#a0a0c8" stroke-width="0.7"/><line x1="11" y1="11" x2="19" y2="11" stroke="#a0a0c8" stroke-width="0.7"/><path d="M6 15 L8 12.5 L23 12.5 L23 20.5 L21 22.8 L6 22.8 Z" fill="#c0cce0" stroke="#5a6e98" stroke-width="0.9"/><rect x="7" y="16" width="13" height="5.8" fill="#f0f4fa"/><rect x="16" y="18.4" width="1" height="2.2" fill="#20a040"/></svg>
<div style="position:absolute;left:852px;top:127px;width:30px;height:30px;background:linear-gradient(#fdfdfd,#eeeeee);border:1px solid #b0b0b0;border-radius:3px;"></div>
<svg style="position:absolute;left:852px;top:127px" width="30" height="30" viewBox="0 0 30 30"><path d="M7.7 6 L19 6 L21.8 8.8 L21.8 23.8 L7.7 23.8 Z" fill="#d4e6f6" stroke="#8cb0d8" stroke-width="0.8"/><g stroke="#a8c4e0" stroke-width="0.6"><line x1="12" y1="12" x2="20" y2="12"/><line x1="12" y1="14.5" x2="20" y2="14.5"/><line x1="12" y1="17" x2="20" y2="17"/><line x1="10" y1="19.5" x2="20" y2="19.5"/></g><rect x="5.7" y="8" width="10.3" height="10" rx="1.4" fill="#d80808"/><path d="M8 16 Q10.8 9 11 11 Q11 13 13.8 15.5 Q10.8 14.2 8 16 Z" fill="none" stroke="#fff" stroke-width="0.9"/></svg>
<div style="position:absolute;left:887px;top:127px;width:30px;height:30px;background:linear-gradient(#fdfdfd,#eeeeee);border:1px solid #b0b0b0;border-radius:3px;"></div>
<svg style="position:absolute;left:887px;top:127px" width="30" height="30" viewBox="0 0 30 30"><circle cx="9" cy="15.4" r="1.1" fill="#2a4a80"/><circle cx="15" cy="15.4" r="1.1" fill="#2a4a80"/><circle cx="21" cy="15.4" r="1.1" fill="#2a4a80"/></svg>
<div style="position:absolute;left:592px;top:164px;width:833px;height:30px;background:#d0dae4;"></div>
<div style="position:absolute;left:701px;top:171.0px;width:400px;height:16px;line-height:16px;text-align:center;white-space:nowrap;color:#222;font-size:13px;font-weight:bold;">심</div>
<div style="position:absolute;left:724px;top:171.0px;width:400px;height:16px;line-height:16px;text-align:center;white-space:nowrap;color:#222;font-size:13px;font-weight:bold;">장</div>
<div style="position:absolute;left:747px;top:171.0px;width:400px;height:16px;line-height:16px;text-align:center;white-space:nowrap;color:#222;font-size:13px;font-weight:bold;">초</div>
<div style="position:absolute;left:770px;top:171.0px;width:400px;height:16px;line-height:16px;text-align:center;white-space:nowrap;color:#222;font-size:13px;font-weight:bold;">음</div>
<div style="position:absolute;left:793px;top:171.0px;width:400px;height:16px;line-height:16px;text-align:center;white-space:nowrap;color:#222;font-size:13px;font-weight:bold;">파</div>
<div style="position:absolute;left:823.6px;top:171.0px;width:400px;height:16px;line-height:16px;text-align:center;white-space:nowrap;color:#222;font-size:13px;font-weight:bold;">판</div>
<div style="position:absolute;left:847px;top:171.0px;width:400px;height:16px;line-height:16px;text-align:center;white-space:nowrap;color:#222;font-size:13px;font-weight:bold;">독</div>
<div style="position:absolute;left:869.7px;top:171.0px;width:400px;height:16px;line-height:16px;text-align:center;white-space:nowrap;color:#222;font-size:13px;font-weight:bold;">소</div>
<div style="position:absolute;left:893px;top:171.0px;width:400px;height:16px;line-height:16px;text-align:center;white-space:nowrap;color:#222;font-size:13px;font-weight:bold;">견</div>
<div style="position:absolute;left:916px;top:171.0px;width:400px;height:16px;line-height:16px;text-align:center;white-space:nowrap;color:#222;font-size:13px;font-weight:bold;">서</div>
<div style="position:absolute;left:602px;top:200.5px;height:16px;line-height:16px;white-space:nowrap;color:#222;font-size:12px;">차트번호</div>
<div style="position:absolute;left:672px;top:197px;width:124px;height:24px;background:#fff;border:1px solid #8f8f8f;"></div>
<div style="position:absolute;left:676px;top:200.5px;height:16px;line-height:16px;white-space:nowrap;color:#111;font-size:12px;">1</div>
<div style="position:absolute;left:811px;top:200.5px;height:16px;line-height:16px;white-space:nowrap;color:#222;font-size:12px;">환자명</div>
<div style="position:absolute;left:883px;top:200.5px;height:16px;line-height:16px;white-space:nowrap;color:#111;font-size:12px;">김환자</div>
<div style="position:absolute;left:1019px;top:200.5px;height:16px;line-height:16px;white-space:nowrap;color:#222;font-size:12px;">생년월일</div>
<div style="position:absolute;left:1092px;top:200.5px;height:16px;line-height:16px;white-space:nowrap;color:#111;font-size:12px;">1980-06-22</div>
<div style="position:absolute;left:1227px;top:200.5px;height:16px;line-height:16px;white-space:nowrap;color:#222;font-size:12px;">성별/나이</div>
<div style="position:absolute;left:1299px;top:200.5px;height:16px;line-height:16px;white-space:nowrap;color:#111;font-size:12px;">M/43</div>
<div style="position:absolute;left:602px;top:230.5px;height:16px;line-height:16px;white-space:nowrap;color:#222;font-size:12px;">발행의사</div>
<div style="position:absolute;left:672px;top:227px;width:124px;height:24px;background:#fff;border:1px solid #8f8f8f;"></div>
<div style="position:absolute;left:677px;top:230.5px;height:16px;line-height:16px;white-space:nowrap;color:#111;font-size:12px;">김의사</div>
<svg style="position:absolute;left:778px;top:234px" width="12" height="9"><path d="M1.5 2 L6 6.5 L10.5 2" fill="none" stroke="#333" stroke-width="1.4"/></svg>
<div style="position:absolute;left:811px;top:230.5px;height:16px;line-height:16px;white-space:nowrap;color:#222;font-size:12px;">발행일자</div>
<div style="position:absolute;left:881px;top:227px;width:123px;height:24px;background:#fff;border:1px solid #8f8f8f;"></div>
<div style="position:absolute;left:889px;top:230.5px;height:16px;line-height:16px;white-space:nowrap;color:#111;font-size:12px;">2023-11-09</div>
<svg style="position:absolute;left:981px;top:230px" width="20" height="18" viewBox="0 0 20 18"><rect x="0.5" y="1.5" width="19" height="16" fill="#f4f4f4" stroke="#333" stroke-width="1"/><rect x="1" y="2" width="18" height="4" fill="#4a88d0"/><circle cx="10" cy="3" r="1.2" fill="#fff"/><text x="10" y="15.8" font-size="10" font-weight="bold" text-anchor="middle" fill="#444" font-family="Liberation Sans">15</text></svg>
<div style="position:absolute;left:1019px;top:230.5px;height:16px;line-height:16px;white-space:nowrap;color:#222;font-size:12px;">발행번호</div>
<div style="position:absolute;left:1227px;top:230.5px;height:16px;line-height:16px;white-space:nowrap;color:#222;font-size:12px;">전자서명</div>
<div style="position:absolute;left:1299px;top:230.5px;height:16px;line-height:16px;white-space:nowrap;color:#111;font-size:12px;">서명전</div>
<div style="position:absolute;left:592px;top:254px;width:816px;height:582px;background:#fff;overflow:hidden;"></div>
<div style="position:absolute;left:1408px;top:254px;width:17px;height:582px;background:#efefef;"></div>
<div style="position:absolute;left:1408px;top:271px;width:17px;height:201px;background:#cbcbcb;"></div>
<svg style="position:absolute;left:1411px;top:258px" width="11" height="8"><path d="M1.5 6 L5.5 2 L9.5 6" fill="none" stroke="#a0a0a0" stroke-width="1.2"/></svg>
<svg style="position:absolute;left:1411px;top:823px" width="11" height="8"><path d="M1.5 2 L5.5 6 L9.5 2" fill="none" stroke="#a0a0a0" stroke-width="1.2"/></svg>
<div style="position:absolute;left:602px;top:264px;width:796px;height:193px;background:#fff;border:1px solid #a8a8a8;border-radius:3px;"></div>
<div style="position:absolute;left:603px;top:265px;width:794px;height:31px;background:linear-gradient(#ffffff,#efefef);border-radius:3px 3px 0 0;"></div>
<div style="position:absolute;left:603px;top:296px;width:794px;height:1px;background:#b4b4b4;"></div>
<div style="position:absolute;left:608px;top:271.0px;height:16px;line-height:16px;white-space:nowrap;color:#222;font-size:12px;">환자 정보</div>
<div style="position:absolute;left:603px;top:319px;width:794px;height:1px;background:#b4b4b4;"></div>
<div style="position:absolute;left:603px;top:342px;width:794px;height:1px;background:#b4b4b4;"></div>
<div style="position:absolute;left:603px;top:365px;width:794px;height:1px;background:#b4b4b4;"></div>
<div style="position:absolute;left:603px;top:297px;width:98px;height:22px;background:#f1f5f9;"></div>
<div style="position:absolute;left:603px;top:320px;width:98px;height:22px;background:#f1f5f9;"></div>
<div style="position:absolute;left:603px;top:343px;width:98px;height:22px;background:#f1f5f9;"></div>
<div style="position:absolute;left:603px;top:366px;width:98px;height:90px;background:#f1f5f9;"></div>
<div style="position:absolute;left:701px;top:297px;width:1px;height:159px;background:#b4b4b4;"></div>
<div style="position:absolute;left:613px;top:299.0px;height:16px;line-height:16px;white-space:nowrap;color:#222;font-size:12px;">검사 구분</div>
<svg style="position:absolute;left:712.5px;top:301.5px" width="14" height="14"><circle cx="7" cy="7" r="6" fill="#fff" stroke="#1f8a8a" stroke-width="1.6"/><circle cx="7" cy="7" r="3" fill="#1f7a7a"/></svg>
<div style="position:absolute;left:733px;top:299.0px;height:16px;line-height:16px;white-space:nowrap;color:#111;font-size:12px;">단순</div>
<svg style="position:absolute;left:778px;top:301.5px" width="14" height="14"><circle cx="7" cy="7" r="6" fill="#fff" stroke="#c8c8c8" stroke-width="1.2"/></svg>
<div style="position:absolute;left:798px;top:299.0px;height:16px;line-height:16px;white-space:nowrap;color:#111;font-size:12px;">일반</div>
<svg style="position:absolute;left:842.5px;top:301.5px" width="14" height="14"><circle cx="7" cy="7" r="6" fill="#fff" stroke="#c8c8c8" stroke-width="1.2"/></svg>
<div style="position:absolute;left:862px;top:299.0px;height:16px;line-height:16px;white-space:nowrap;color:#111;font-size:12px;">전문</div>
<div style="position:absolute;left:613px;top:322.0px;height:16px;line-height:16px;white-space:nowrap;color:#222;font-size:12px;">키/체중</div>
<div style="position:absolute;left:751px;top:320px;width:1px;height:22px;background:#b4b4b4;"></div>
<div style="position:absolute;left:801px;top:320px;width:1px;height:22px;background:#b4b4b4;"></div>
<div style="position:absolute;left:900px;top:320px;width:1px;height:22px;background:#b4b4b4;"></div>
<div style="position:absolute;left:1000px;top:320px;width:1px;height:22px;background:#b4b4b4;"></div>
<div style="position:absolute;left:1099px;top:320px;width:1px;height:22px;background:#b4b4b4;"></div>
<div style="position:absolute;left:1198px;top:320px;width:1px;height:22px;background:#b4b4b4;"></div>
<div style="position:absolute;left:1297px;top:320px;width:1px;height:22px;background:#b4b4b4;"></div>
<div style="position:absolute;left:802px;top:320px;width:98px;height:22px;background:#f1f5f9;"></div>
<div style="position:absolute;left:1001px;top:320px;width:98px;height:22px;background:#f1f5f9;"></div>
<div style="position:absolute;left:1199px;top:320px;width:98px;height:22px;background:#f1f5f9;"></div>
<div style="position:absolute;left:811px;top:322.0px;height:16px;line-height:16px;white-space:nowrap;color:#222;font-size:12px;">체표면적</div>
<div style="position:absolute;left:1010px;top:322.0px;height:16px;line-height:16px;white-space:nowrap;color:#222;font-size:12px;">심박수</div>
<div style="position:absolute;left:1209px;top:322.0px;height:16px;line-height:16px;white-space:nowrap;color:#222;font-size:12px;">혈압</div>
<div style="position:absolute;left:613px;top:345.0px;height:16px;line-height:16px;white-space:nowrap;color:#222;font-size:12px;">심전도 소견</div>
<div style="position:absolute;left:1000px;top:343px;width:1px;height:22px;background:#b4b4b4;"></div>
<div style="position:absolute;left:1099px;top:343px;width:1px;height:22px;background:#b4b4b4;"></div>
<div style="position:absolute;left:1001px;top:343px;width:98px;height:22px;background:#f1f5f9;"></div>
<div style="position:absolute;left:1010px;top:345.0px;height:16px;line-height:16px;white-space:nowrap;color:#222;font-size:12px;">검사 사유</div>
<div class="mono" style="position:absolute;left:613px;top:385.5px;font-size:12px;line-height:17.5px;color:#222;transform:scaleX(0.833);transform-origin:0 0;">Conclusion<br>&amp;<br>Diagnosis</div>
<div style="position:absolute;left:1380px;top:366px;width:17px;height:90px;background:#efefef;"></div>
<svg style="position:absolute;left:1383px;top:369px" width="11" height="8"><path d="M1.5 6 L5.5 2 L9.5 6" fill="none" stroke="#c8c8c8" stroke-width="1.1"/></svg>
<svg style="position:absolute;left:1383px;top:444px" width="11" height="8"><path d="M1.5 2 L5.5 6 L9.5 2" fill="none" stroke="#c8c8c8" stroke-width="1.1"/></svg>
<div style="position:absolute;left:602px;top:467px;width:796px;height:400px;background:#fff;border:1px solid #a8a8a8;border-radius:3px;"></div>
<div style="position:absolute;left:603px;top:468px;width:794px;height:31px;background:linear-gradient(#ffffff,#efefef);border-radius:3px 3px 0 0;"></div>
<div style="position:absolute;left:603px;top:499px;width:794px;height:1px;background:#b4b4b4;"></div>
<div style="position:absolute;left:603px;top:500px;width:794px;height:22px;background:#f1f5f9;"></div>
<div class="mono" style="position:absolute;left:607px;top:475.0px;height:16px;line-height:16px;white-space:nowrap;font-size:12px;color:#222;transform:scaleX(0.833);transform-origin:0 0;">Echo Findings</div>
<div class="mono" style="position:absolute;left:613px;top:503.5px;height:16px;line-height:16px;white-space:nowrap;font-size:12px;color:#222;transform:scaleX(0.833);transform-origin:0 0;">1. LV</div>
<div style="position:absolute;left:603px;top:522px;width:794px;height:1px;background:#b4b4b4;"></div>
<div style="position:absolute;left:603px;top:523px;width:179px;height:22px;background:#f1f5f9;"></div>
<div style="position:absolute;left:782px;top:523px;width:1px;height:22px;background:#b4b4b4;"></div>
<div class="mono" style="position:absolute;left:613px;top:526.5px;height:16px;line-height:16px;white-space:nowrap;font-size:12px;color:#222;transform:scaleX(0.833);transform-origin:0 0;">Chamber size</div>
<svg style="position:absolute;left:793.5px;top:527.5px" width="14" height="14"><circle cx="7" cy="7" r="6" fill="#fff" stroke="#c8c8c8" stroke-width="1.2"/></svg>
<div class="mono" style="position:absolute;left:814px;top:526.5px;height:16px;line-height:16px;white-space:nowrap;font-size:12px;color:#111;transform:scaleX(0.833);transform-origin:0 0;">Normal</div>
<svg style="position:absolute;left:948px;top:527.5px" width="14" height="14"><circle cx="7" cy="7" r="6" fill="#fff" stroke="#c8c8c8" stroke-width="1.2"/></svg>
<div class="mono" style="position:absolute;left:970px;top:526.5px;height:16px;line-height:16px;white-space:nowrap;font-size:12px;color:#111;transform:scaleX(0.833);transform-origin:0 0;">Increased</div>
<svg style="position:absolute;left:1100.5px;top:527.5px" width="14" height="14"><circle cx="7" cy="7" r="6" fill="#fff" stroke="#c8c8c8" stroke-width="1.2"/></svg>
<div class="mono" style="position:absolute;left:1121px;top:526.5px;height:16px;line-height:16px;white-space:nowrap;font-size:12px;color:#111;transform:scaleX(0.833);transform-origin:0 0;">Decreased</div>
<div style="position:absolute;left:603px;top:545px;width:794px;height:1px;background:#b4b4b4;"></div>
<div style="position:absolute;left:603px;top:546px;width:179px;height:22px;background:#f1f5f9;"></div>
<div style="position:absolute;left:782px;top:546px;width:1px;height:22px;background:#b4b4b4;"></div>
<div class="mono" style="position:absolute;left:613px;top:549.5px;height:16px;line-height:16px;white-space:nowrap;font-size:12px;color:#222;transform:scaleX(0.833);transform-origin:0 0;">Wall thickness</div>
<svg style="position:absolute;left:793.5px;top:550.5px" width="14" height="14"><circle cx="7" cy="7" r="6" fill="#fff" stroke="#c8c8c8" stroke-width="1.2"/></svg>
<div class="mono" style="position:absolute;left:814px;top:549.5px;height:16px;line-height:16px;white-space:nowrap;font-size:12px;color:#111;transform:scaleX(0.833);transform-origin:0 0;">Normal</div>
<svg style="position:absolute;left:948px;top:550.5px" width="14" height="14"><circle cx="7" cy="7" r="6" fill="#fff" stroke="#c8c8c8" stroke-width="1.2"/></svg>
<div class="mono" style="position:absolute;left:970px;top:549.5px;height:16px;line-height:16px;white-space:nowrap;font-size:12px;color:#111;transform:scaleX(0.833);transform-origin:0 0;">Increased</div>
<svg style="position:absolute;left:1100.5px;top:550.5px" width="14" height="14"><circle cx="7" cy="7" r="6" fill="#fff" stroke="#c8c8c8" stroke-width="1.2"/></svg>
<div class="mono" style="position:absolute;left:1121px;top:549.5px;height:16px;line-height:16px;white-space:nowrap;font-size:12px;color:#111;transform:scaleX(0.833);transform-origin:0 0;">Thinning</div>
<div style="position:absolute;left:603px;top:568px;width:794px;height:1px;background:#b4b4b4;"></div>
<div style="position:absolute;left:603px;top:569px;width:179px;height:22px;background:#f1f5f9;"></div>
<div style="position:absolute;left:782px;top:569px;width:1px;height:22px;background:#b4b4b4;"></div>
<div class="mono" style="position:absolute;left:613px;top:572.5px;height:16px;line-height:16px;white-space:nowrap;font-size:12px;color:#222;transform:scaleX(0.833);transform-origin:0 0;">Systolic function</div>
<svg style="position:absolute;left:793.5px;top:573.5px" width="14" height="14"><circle cx="7" cy="7" r="6" fill="#fff" stroke="#c8c8c8" stroke-width="1.2"/></svg>
<div class="mono" style="position:absolute;left:814px;top:572.5px;height:16px;line-height:16px;white-space:nowrap;font-size:12px;color:#111;transform:scaleX(0.833);transform-origin:0 0;">Normal</div>
<svg style="position:absolute;left:948px;top:573.5px" width="14" height="14"><circle cx="7" cy="7" r="6" fill="#fff" stroke="#c8c8c8" stroke-width="1.2"/></svg>
<div class="mono" style="position:absolute;left:970px;top:572.5px;height:16px;line-height:16px;white-space:nowrap;font-size:12px;color:#111;transform:scaleX(0.833);transform-origin:0 0;">Impaired (</div>
<svg style="position:absolute;left:1033px;top:573.5px" width="14" height="14"><circle cx="7" cy="7" r="6" fill="#fff" stroke="#c8c8c8" stroke-width="1.2"/></svg>
<div class="mono" style="position:absolute;left:1053px;top:572.5px;height:16px;line-height:16px;white-space:nowrap;font-size:12px;color:#111;transform:scaleX(0.833);transform-origin:0 0;">Mild</div>
<svg style="position:absolute;left:1088px;top:573.5px" width="14" height="14"><circle cx="7" cy="7" r="6" fill="#fff" stroke="#c8c8c8" stroke-width="1.2"/></svg>
<div class="mono" style="position:absolute;left:1108px;top:572.5px;height:16px;line-height:16px;white-space:nowrap;font-size:12px;color:#111;transform:scaleX(0.833);transform-origin:0 0;">Moderate</div>
<svg style="position:absolute;left:1167px;top:573.5px" width="14" height="14"><circle cx="7" cy="7" r="6" fill="#fff" stroke="#c8c8c8" stroke-width="1.2"/></svg>
<div class="mono" style="position:absolute;left:1187px;top:572.5px;height:16px;line-height:16px;white-space:nowrap;font-size:12px;color:#111;transform:scaleX(0.833);transform-origin:0 0;">Severe)</div>
<div style="position:absolute;left:603px;top:591px;width:794px;height:1px;background:#b4b4b4;"></div>
<div style="position:absolute;left:603px;top:592px;width:179px;height:22px;background:#f1f5f9;"></div>
<div style="position:absolute;left:782px;top:592px;width:1px;height:22px;background:#b4b4b4;"></div>
<div class="mono" style="position:absolute;left:613px;top:595.5px;height:16px;line-height:16px;white-space:nowrap;font-size:12px;color:#222;transform:scaleX(0.833);transform-origin:0 0;">Wall motion abnormality</div>
<svg style="position:absolute;left:793.5px;top:596.5px" width="14" height="14"><circle cx="7" cy="7" r="6" fill="#fff" stroke="#c8c8c8" stroke-width="1.2"/></svg>
<div class="mono" style="position:absolute;left:814px;top:595.5px;height:16px;line-height:16px;white-space:nowrap;font-size:12px;color:#111;transform:scaleX(0.833);transform-origin:0 0;">None</div>
<svg style="position:absolute;left:948px;top:596.5px" width="14" height="14"><circle cx="7" cy="7" r="6" fill="#fff" stroke="#c8c8c8" stroke-width="1.2"/></svg>
<div class="mono" style="position:absolute;left:969px;top:595.5px;height:16px;line-height:16px;white-space:nowrap;font-size:12px;color:#111;transform:scaleX(0.833);transform-origin:0 0;">Diffuse</div>
<svg style="position:absolute;left:1100.5px;top:596.5px" width="14" height="14"><circle cx="7" cy="7" r="6" fill="#fff" stroke="#c8c8c8" stroke-width="1.2"/></svg>
<div class="mono" style="position:absolute;left:1121px;top:595.5px;height:16px;line-height:16px;white-space:nowrap;font-size:12px;color:#111;transform:scaleX(0.833);transform-origin:0 0;">Regional</div>
<div style="position:absolute;left:603px;top:614px;width:794px;height:1px;background:#b4b4b4;"></div>
<div style="position:absolute;left:603px;top:615px;width:179px;height:22px;background:#f1f5f9;"></div>
<div style="position:absolute;left:782px;top:615px;width:1px;height:22px;background:#b4b4b4;"></div>
<div class="mono" style="position:absolute;left:613px;top:618.5px;height:16px;line-height:16px;white-space:nowrap;font-size:12px;color:#222;transform:scaleX(0.833);transform-origin:0 0;">Diastolic function</div>
<svg style="position:absolute;left:793.5px;top:619.5px" width="14" height="14"><circle cx="7" cy="7" r="6" fill="#fff" stroke="#c8c8c8" stroke-width="1.2"/></svg>
<div class="mono" style="position:absolute;left:814px;top:618.5px;height:16px;line-height:16px;white-space:nowrap;font-size:12px;color:#111;transform:scaleX(0.833);transform-origin:0 0;">Normal</div>
<svg style="position:absolute;left:948px;top:619.5px" width="14" height="14"><circle cx="7" cy="7" r="6" fill="#fff" stroke="#c8c8c8" stroke-width="1.2"/></svg>
<div class="mono" style="position:absolute;left:970px;top:618.5px;height:16px;line-height:16px;white-space:nowrap;font-size:12px;color:#111;transform:scaleX(0.833);transform-origin:0 0;">Indeterminate</div>
<svg style="position:absolute;left:1100.5px;top:619.5px" width="14" height="14"><circle cx="7" cy="7" r="6" fill="#fff" stroke="#c8c8c8" stroke-width="1.2"/></svg>
<div class="mono" style="position:absolute;left:1121px;top:618.5px;height:16px;line-height:16px;white-space:nowrap;font-size:12px;color:#111;transform:scaleX(0.833);transform-origin:0 0;">Abnormal (Gr</div>
<div class="mono" style="position:absolute;left:1250px;top:618.5px;height:16px;line-height:16px;white-space:nowrap;font-size:12px;color:#111;transform:scaleX(0.833);transform-origin:0 0;">)</div>
<div style="position:absolute;left:1207px;top:631px;width:40px;height:1px;background:#555;"></div>
<div style="position:absolute;left:603px;top:637px;width:794px;height:1px;background:#b4b4b4;"></div>
<div style="position:absolute;left:603px;top:638px;width:179px;height:22px;background:#f1f5f9;"></div>
<div style="position:absolute;left:782px;top:638px;width:1px;height:22px;background:#b4b4b4;"></div>
<div class="mono" style="position:absolute;left:613px;top:641.5px;height:16px;line-height:16px;white-space:nowrap;font-size:12px;color:#222;transform:scaleX(0.833);transform-origin:0 0;">2. RV chamber size</div>
<svg style="position:absolute;left:793.5px;top:642.5px" width="14" height="14"><circle cx="7" cy="7" r="6" fill="#fff" stroke="#c8c8c8" stroke-width="1.2"/></svg>
<div class="mono" style="position:absolute;left:814px;top:641.5px;height:16px;line-height:16px;white-space:nowrap;font-size:12px;color:#111;transform:scaleX(0.833);transform-origin:0 0;">Normal</div>
<svg style="position:absolute;left:948px;top:642.5px" width="14" height="14"><circle cx="7" cy="7" r="6" fill="#fff" stroke="#c8c8c8" stroke-width="1.2"/></svg>
<div class="mono" style="position:absolute;left:970px;top:641.5px;height:16px;line-height:16px;white-space:nowrap;font-size:12px;color:#111;transform:scaleX(0.833);transform-origin:0 0;">Increased</div>
<div style="position:absolute;left:603px;top:660px;width:794px;height:1px;background:#b4b4b4;"></div>
<div style="position:absolute;left:603px;top:661px;width:179px;height:22px;background:#f1f5f9;"></div>
<div style="position:absolute;left:782px;top:661px;width:1px;height:22px;background:#b4b4b4;"></div>
<div class="mono" style="position:absolute;left:613px;top:664.5px;height:16px;line-height:16px;white-space:nowrap;font-size:12px;color:#222;transform:scaleX(0.833);transform-origin:0 0;">Systolic function</div>
<svg style="position:absolute;left:793.5px;top:665.5px" width="14" height="14"><circle cx="7" cy="7" r="6" fill="#fff" stroke="#c8c8c8" stroke-width="1.2"/></svg>
<div class="mono" style="position:absolute;left:814px;top:664.5px;height:16px;line-height:16px;white-space:nowrap;font-size:12px;color:#111;transform:scaleX(0.833);transform-origin:0 0;">Normal</div>
<svg style="position:absolute;left:948px;top:665.5px" width="14" height="14"><circle cx="7" cy="7" r="6" fill="#fff" stroke="#c8c8c8" stroke-width="1.2"/></svg>
<div class="mono" style="position:absolute;left:970px;top:664.5px;height:16px;line-height:16px;white-space:nowrap;font-size:12px;color:#111;transform:scaleX(0.833);transform-origin:0 0;">Impaired</div>
<div style="position:absolute;left:603px;top:683px;width:794px;height:1px;background:#b4b4b4;"></div>
<div style="position:absolute;left:603px;top:684px;width:179px;height:22px;background:#f1f5f9;"></div>
<div style="position:absolute;left:782px;top:684px;width:1px;height:22px;background:#b4b4b4;"></div>
<div class="mono" style="position:absolute;left:613px;top:687.5px;height:16px;line-height:16px;white-space:nowrap;font-size:12px;color:#222;transform:scaleX(0.833);transform-origin:0 0;">Other findings</div>
<div style="position:absolute;left:603px;top:706px;width:794px;height:1px;background:#b4b4b4;"></div>
<div style="position:absolute;left:603px;top:707px;width:179px;height:22px;background:#f1f5f9;"></div>
<div style="position:absolute;left:782px;top:707px;width:1px;height:22px;background:#b4b4b4;"></div>
<div class="mono" style="position:absolute;left:613px;top:710.5px;height:16px;line-height:16px;white-space:nowrap;font-size:12px;color:#222;transform:scaleX(0.833);transform-origin:0 0;">3. Atrium</div>
<svg style="position:absolute;left:793.5px;top:711.5px" width="14" height="14"><rect x="0.5" y="0.5" width="13" height="13" rx="2" fill="#d9d9d9" stroke="#cfcfcf"/><path d="M3.5 7 L6 10 L10.5 4" fill="none" stroke="#f7f7f7" stroke-width="1.6"/></svg>
<div class="mono" style="position:absolute;left:814px;top:710.5px;height:16px;line-height:16px;white-space:nowrap;font-size:12px;color:#111;transform:scaleX(0.833);transform-origin:0 0;">RAE</div>
<svg style="position:absolute;left:948px;top:711.5px" width="14" height="14"><rect x="0.5" y="0.5" width="13" height="13" rx="2" fill="#d9d9d9" stroke="#cfcfcf"/><path d="M3.5 7 L6 10 L10.5 4" fill="none" stroke="#f7f7f7" stroke-width="1.6"/></svg>
<div class="mono" style="position:absolute;left:969px;top:710.5px;height:16px;line-height:16px;white-space:nowrap;font-size:12px;color:#111;transform:scaleX(0.833);transform-origin:0 0;">LAE</div>
<div style="position:absolute;left:603px;top:729px;width:794px;height:1px;background:#b4b4b4;"></div>
<div style="position:absolute;left:603px;top:730px;width:179px;height:22px;background:#f1f5f9;"></div>
<div style="position:absolute;left:782px;top:730px;width:1px;height:22px;background:#b4b4b4;"></div>
<div class="mono" style="position:absolute;left:613px;top:733.5px;height:16px;line-height:16px;white-space:nowrap;font-size:12px;color:#222;transform:scaleX(0.833);transform-origin:0 0;">Other findings</div>
<div style="position:absolute;left:603px;top:752px;width:794px;height:1px;background:#b4b4b4;"></div>
<div style="position:absolute;left:603px;top:753px;width:179px;height:68px;background:#f1f5f9;"></div>
<div style="position:absolute;left:782px;top:753px;width:1px;height:68px;background:#b4b4b4;"></div>
<div class="mono" style="position:absolute;left:613px;top:756.5px;height:16px;line-height:16px;white-space:nowrap;font-size:12px;color:#222;transform:scaleX(0.833);transform-origin:0 0;">4. Aortic root</div>
<div style="position:absolute;left:717px;top:755px;width:40px;height:15px;background:#fff;"></div>
<div style="position:absolute;left:717px;top:769px;width:40px;height:1px;background:#888;"></div>
<div class="mono" style="position:absolute;left:757px;top:756.5px;height:16px;line-height:16px;white-space:nowrap;font-size:12px;color:#222;transform:scaleX(0.833);transform-origin:0 0;">mm</div>
<div class="mono" style="position:absolute;left:793px;top:756.5px;height:16px;line-height:16px;white-space:nowrap;font-size:12px;color:#222;transform:scaleX(0.833);transform-origin:0 0;">Dissection</div>
<svg style="position:absolute;left:948px;top:757.5px" width="14" height="14"><circle cx="7" cy="7" r="6" fill="#fff" stroke="#c8c8c8" stroke-width="1.2"/></svg>
<div class="mono" style="position:absolute;left:969px;top:756.5px;height:16px;line-height:16px;white-space:nowrap;font-size:12px;color:#111;transform:scaleX(0.833);transform-origin:0 0;">No</div>
<svg style="position:absolute;left:1100.5px;top:757.5px" width="14" height="14"><circle cx="7" cy="7" r="6" fill="#fff" stroke="#c8c8c8" stroke-width="1.2"/></svg>
<div class="mono" style="position:absolute;left:1121px;top:756.5px;height:16px;line-height:16px;white-space:nowrap;font-size:12px;color:#111;transform:scaleX(0.833);transform-origin:0 0;">Yes</div>
<div style="position:absolute;left:783px;top:775px;width:614px;height:1px;background:#b4b4b4;"></div>
<div class="mono" style="position:absolute;left:793px;top:779.5px;height:16px;line-height:16px;white-space:nowrap;font-size:12px;color:#222;transform:scaleX(0.833);transform-origin:0 0;">Aneurysm</div>
<svg style="position:absolute;left:948px;top:780.5px" width="14" height="14"><circle cx="7" cy="7" r="6" fill="#fff" stroke="#c8c8c8" stroke-width="1.2"/></svg>
<div class="mono" style="position:absolute;left:969px;top:779.5px;height:16px;line-height:16px;white-space:nowrap;font-size:12px;color:#111;transform:scaleX(0.833);transform-origin:0 0;">No</div>
<svg style="position:absolute;left:1100.5px;top:780.5px" width="14" height="14"><circle cx="7" cy="7" r="6" fill="#fff" stroke="#c8c8c8" stroke-width="1.2"/></svg>
<div class="mono" style="position:absolute;left:1121px;top:779.5px;height:16px;line-height:16px;white-space:nowrap;font-size:12px;color:#111;transform:scaleX(0.833);transform-origin:0 0;">Yes (</div>
<div style="position:absolute;left:1155px;top:792px;width:40px;height:1px;background:#555;"></div>
<div class="mono" style="position:absolute;left:1196px;top:779.5px;height:16px;line-height:16px;white-space:nowrap;font-size:12px;color:#111;transform:scaleX(0.833);transform-origin:0 0;">mm)</div>
<div style="position:absolute;left:783px;top:798px;width:614px;height:1px;background:#b4b4b4;"></div>
<div class="mono" style="position:absolute;left:793px;top:802.5px;height:16px;line-height:16px;white-space:nowrap;font-size:12px;color:#222;transform:scaleX(0.833);transform-origin:0 0;">IVC plethora</div>
<svg style="position:absolute;left:948px;top:803.5px" width="14" height="14"><circle cx="7" cy="7" r="6" fill="#fff" stroke="#c8c8c8" stroke-width="1.2"/></svg>
<div class="mono" style="position:absolute;left:969px;top:802.5px;height:16px;line-height:16px;white-space:nowrap;font-size:12px;color:#111;transform:scaleX(0.833);transform-origin:0 0;">No</div>
<svg style="position:absolute;left:1100.5px;top:803.5px" width="14" height="14"><circle cx="7" cy="7" r="6" fill="#fff" stroke="#c8c8c8" stroke-width="1.2"/></svg>
<div class="mono" style="position:absolute;left:1121px;top:802.5px;height:16px;line-height:16px;white-space:nowrap;font-size:12px;color:#111;transform:scaleX(0.833);transform-origin:0 0;">Yes (</div>
<div style="position:absolute;left:1155px;top:815px;width:40px;height:1px;background:#555;"></div>
<div class="mono" style="position:absolute;left:1196px;top:802.5px;height:16px;line-height:16px;white-space:nowrap;font-size:12px;color:#111;transform:scaleX(0.833);transform-origin:0 0;">mm)</div>
<div style="position:absolute;left:603px;top:821px;width:794px;height:1px;background:#b4b4b4;"></div>
<div style="position:absolute;left:603px;top:822px;width:179px;height:22px;background:#f1f5f9;"></div>
<div style="position:absolute;left:782px;top:822px;width:1px;height:22px;background:#b4b4b4;"></div>
<div class="mono" style="position:absolute;left:613px;top:825.5px;height:16px;line-height:16px;white-space:nowrap;font-size:12px;color:#222;transform:scaleX(0.833);transform-origin:0 0;">5. Pericardial effusion</div>
<svg style="position:absolute;left:793.5px;top:826.5px" width="14" height="14"><circle cx="7" cy="7" r="6" fill="#fff" stroke="#c8c8c8" stroke-width="1.2"/></svg>
<div class="mono" style="position:absolute;left:814px;top:825.5px;height:16px;line-height:16px;white-space:nowrap;font-size:12px;color:#111;transform:scaleX(0.833);transform-origin:0 0;">No</div>
<svg style="position:absolute;left:948px;top:826.5px" width="14" height="14"><circle cx="7" cy="7" r="6" fill="#fff" stroke="#c8c8c8" stroke-width="1.2"/></svg>
<div class="mono" style="position:absolute;left:969px;top:825.5px;height:16px;line-height:16px;white-space:nowrap;font-size:12px;color:#111;transform:scaleX(0.833);transform-origin:0 0;">Yes (</div>
<svg style="position:absolute;left:1003px;top:826.5px" width="14" height="14"><rect x="0.5" y="0.5" width="13" height="13" rx="2" fill="#d9d9d9" stroke="#cfcfcf"/><path d="M3.5 7 L6 10 L10.5 4" fill="none" stroke="#f7f7f7" stroke-width="1.6"/></svg>
<div class="mono" style="position:absolute;left:1022px;top:825.5px;height:16px;line-height:16px;white-space:nowrap;font-size:12px;color:#111;transform:scaleX(0.833);transform-origin:0 0;">ant.</div>
<svg style="position:absolute;left:1058px;top:826.5px" width="14" height="14"><rect x="0.5" y="0.5" width="13" height="13" rx="2" fill="#d9d9d9" stroke="#cfcfcf"/><path d="M3.5 7 L6 10 L10.5 4" fill="none" stroke="#f7f7f7" stroke-width="1.6"/></svg>
<div class="mono" style="position:absolute;left:1077px;top:825.5px;height:16px;line-height:16px;white-space:nowrap;font-size:12px;color:#111;transform:scaleX(0.833);transform-origin:0 0;">post.</div>
<div style="position:absolute;left:1118px;top:838px;width:40px;height:1px;background:#555;"></div>
<div class="mono" style="position:absolute;left:1159px;top:825.5px;height:16px;line-height:16px;white-space:nowrap;font-size:12px;color:#111;transform:scaleX(0.833);transform-origin:0 0;">mm.</div>
<svg style="position:absolute;left:1187px;top:826.5px" width="14" height="14"><rect x="0.5" y="0.5" width="13" height="13" rx="2" fill="#d9d9d9" stroke="#cfcfcf"/><path d="M3.5 7 L6 10 L10.5 4" fill="none" stroke="#f7f7f7" stroke-width="1.6"/></svg>
<div class="mono" style="position:absolute;left:1207px;top:825.5px;height:16px;line-height:16px;white-space:nowrap;font-size:12px;color:#111;transform:scaleX(0.833);transform-origin:0 0;">RV collapse)</div>
<div style="position:absolute;left:591px;top:836px;width:835px;height:1px;background:#5a5a5a;"></div>
<div style="position:absolute;left:592px;top:837px;width:833px;height:4px;background:#e9e5e4;"></div>
<div style="position:absolute;left:528px;top:840px;width:961px;height:1px;background:#a6a6a6;"></div>
<div style="position:absolute;left:98px;top:841px;width:1395px;height:5px;background:#f0f0f0;"></div>
<div style="position:absolute;left:0px;top:845px;width:98px;height:1px;background:#9a9a9a;"></div>
<svg style="position:absolute;left:1486px;top:839px" width="7" height="7"><path d="M7 0 L7 7 L0 7 Z" fill="#222"/></svg>
</body></html>
